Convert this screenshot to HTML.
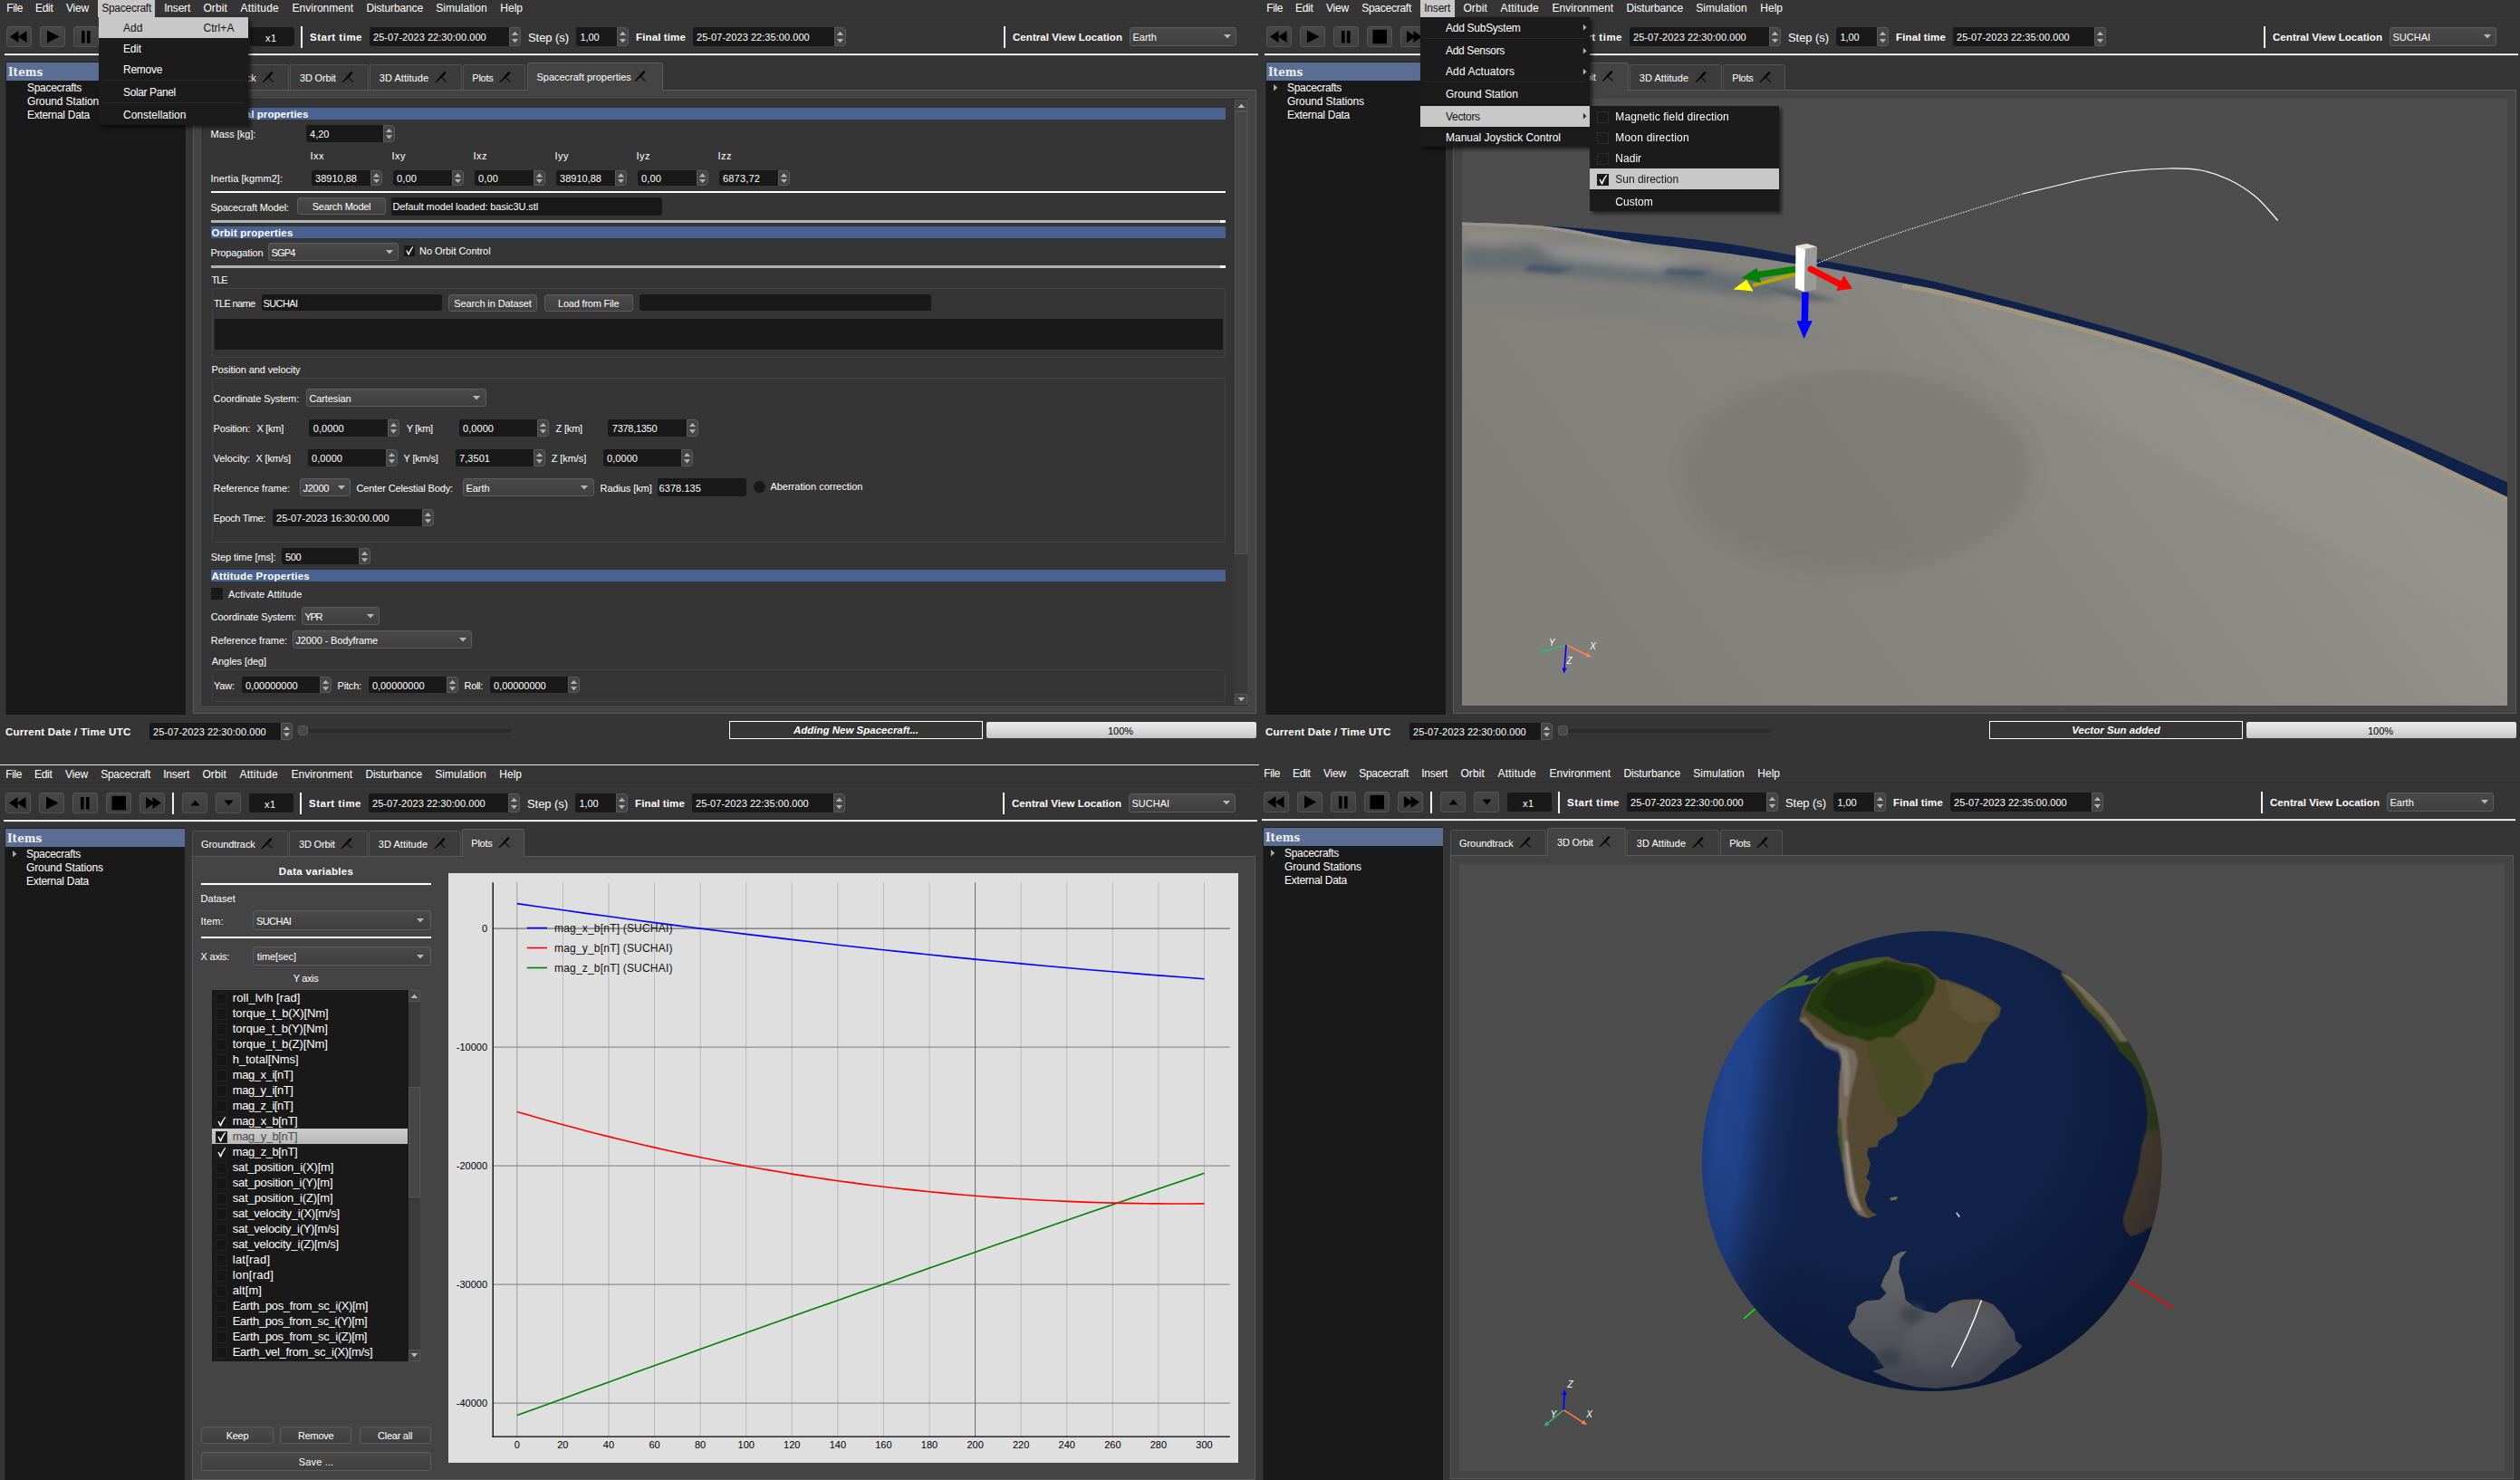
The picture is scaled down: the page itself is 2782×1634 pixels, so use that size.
<!DOCTYPE html>
<html><head><meta charset="utf-8"><title>Spacecraft simulator</title><style>
html,body{margin:0;padding:0;background:#353535;}
body{width:2782px;height:1634px;position:relative;overflow:hidden;font-family:'Liberation Sans',sans-serif;color:#fff;}
.win{position:absolute;overflow:hidden;}
.win div,.win span.t,.win svg.a{position:absolute;}
.t{white-space:nowrap;color:#fff;}
.cb{background:linear-gradient(#4a4a4a,#3f3f3f);border:1px solid #5c5c5c;border-radius:3px;box-sizing:border-box;}
.tb{width:28px;height:23px;background:linear-gradient(#474747,#3e3e3e);border:1px solid #555;border-radius:3px;box-sizing:border-box;}
</style></head><body>
<div class="win" style="left:0px;top:0px;width:1391px;height:845px;"><div style="left:0px;top:0;width:1400px;height:850px;"><div style="left:0px;top:0px;width:1400px;height:850px;background:#353535;"></div>
<div style="left:0px;top:18px;width:1400px;height:1px;background:#303030;"></div>
<span class="t" style="top:1.14px;font-size:12px;line-height:16px;letter-spacing:-0.396px;left:7.25px;">File</span>
<span class="t" style="top:1.14px;font-size:12px;line-height:16px;letter-spacing:-0.294px;left:39px;">Edit</span>
<span class="t" style="top:1.14px;font-size:12px;line-height:16px;letter-spacing:-0.198px;left:73px;">View</span>
<div style="left:108.2px;top:0px;width:63.3px;height:19px;background:#c8c8c8;"></div>
<span class="t" style="top:1.14px;font-size:12px;line-height:16px;letter-spacing:-0.256px;left:112.2px;color:#111;">Spacecraft</span>
<span class="t" style="top:1.14px;font-size:12px;line-height:16px;letter-spacing:-0.210px;left:181.25px;">Insert</span>
<span class="t" style="top:1.14px;font-size:12px;line-height:16px;letter-spacing:0.119px;left:224.4px;">Orbit</span>
<span class="t" style="top:1.14px;font-size:12px;line-height:16px;letter-spacing:0.239px;left:265.4px;">Attitude</span>
<span class="t" style="top:1.14px;font-size:12px;line-height:16px;letter-spacing:0.013px;left:322.5px;">Environment</span>
<span class="t" style="top:1.14px;font-size:12px;line-height:16px;letter-spacing:-0.130px;left:404.4px;">Disturbance</span>
<span class="t" style="top:1.14px;font-size:12px;line-height:16px;letter-spacing:0.048px;left:481.25px;">Simulation</span>
<span class="t" style="top:1.14px;font-size:12px;line-height:16px;letter-spacing:0.018px;left:552.25px;">Help</span>
<div class="tb" style="left:7px;top:29px;"><svg width="28" height="23" viewBox="0 0 28 23" style="position:absolute;left:-1px;top:-1px"><path d="M13.5 5 L13.5 18 L4 11.5Z M22.5 5 L22.5 18 L13 11.5Z" fill="#000"/></svg></div>
<div class="tb" style="left:44px;top:29px;"><svg width="28" height="23" viewBox="0 0 28 23" style="position:absolute;left:-1px;top:-1px"><path d="M8 4.5 L8 18.5 L21.5 11.5Z" fill="#000"/></svg></div>
<div class="tb" style="left:81px;top:29px;"><svg width="28" height="23" viewBox="0 0 28 23" style="position:absolute;left:-1px;top:-1px"><path d="M9 5 h3.6 v13.5 h-3.6Z M15 5 h3.6 v13.5 h-3.6Z" fill="#000"/></svg></div>
<div class="tb" style="left:118px;top:29px;"><svg width="28" height="23" viewBox="0 0 28 23" style="position:absolute;left:-1px;top:-1px"><path d="M6.5 3.8 h15.5 v15.5 h-15.5Z" fill="#000"/></svg></div>
<div class="tb" style="left:155px;top:29px;"><svg width="28" height="23" viewBox="0 0 28 23" style="position:absolute;left:-1px;top:-1px"><path d="M7 5 L7 18 L16.5 11.5Z M14.5 5 L14.5 18 L24 11.5Z" fill="#000"/></svg></div>
<div class="tb" style="left:202px;top:29px;"><svg width="28" height="23" viewBox="0 0 28 23" style="position:absolute;left:-1px;top:-1px"><path d="M9.5 14.5 L19.5 14.5 L14.5 8.5Z" fill="#000"/></svg></div>
<div class="tb" style="left:239px;top:29px;"><svg width="28" height="23" viewBox="0 0 28 23" style="position:absolute;left:-1px;top:-1px"><path d="M9.5 8.5 L19.5 8.5 L14.5 14.5Z" fill="#000"/></svg></div>
<div style="left:191px;top:28.5px;width:2px;height:24px;background:#f0f0f0;"></div>
<div style="left:332px;top:28.5px;width:2px;height:24px;background:#f0f0f0;"></div>
<div style="left:1108px;top:28.5px;width:2px;height:24px;background:#f0f0f0;"></div>
<div style="left:275.5px;top:30px;width:49px;height:20.5px;background:#191919;border-radius:3px;"></div>
<span class="t" style="top:34.73px;font-size:11px;line-height:14px;letter-spacing:0.341px;left:293.05px;">x1</span>
<span class="t" style="top:33.63px;font-size:11.5px;line-height:15px;letter-spacing:0.496px;left:342px;font-weight:bold;">Start time</span>
<div style="left:407.5px;top:30px;width:167.5px;height:21px;background:#191919;border-radius:3px;"></div>
<div style="left:562px;top:30px;width:13px;height:21px;background:#454545;border:1px solid #5a5a5a;border-radius:0 3px 3px 0;box-sizing:border-box;"></div>
<svg class="a" style="left:562px;top:30px" width="13" height="21"><path d="M2.9 8.93 L6.5 4.73 L10.1 8.93Z M2.9 13.12 L6.5 17.32 L10.1 13.12Z" fill="#b2b2b2"/></svg>
<span class="t" style="top:34.23px;font-size:11px;line-height:14px;letter-spacing:0.053px;left:412px;">25-07-2023 22:30:00.000</span>
<span class="t" style="top:32.55px;font-size:13px;line-height:17px;letter-spacing:-0.064px;left:583px;">Step (s)</span>
<div style="left:635.5px;top:30px;width:58.5px;height:21px;background:#191919;border-radius:3px;"></div>
<div style="left:681px;top:30px;width:13px;height:21px;background:#454545;border:1px solid #5a5a5a;border-radius:0 3px 3px 0;box-sizing:border-box;"></div>
<svg class="a" style="left:681px;top:30px" width="13" height="21"><path d="M2.9 8.93 L6.5 4.73 L10.1 8.93Z M2.9 13.12 L6.5 17.32 L10.1 13.12Z" fill="#b2b2b2"/></svg>
<span class="t" style="top:33.63px;font-size:11px;line-height:14px;letter-spacing:-0.102px;left:640.5px;">1,00</span>
<span class="t" style="top:33.63px;font-size:11.5px;line-height:15px;letter-spacing:0.133px;left:702px;font-weight:bold;">Final time</span>
<div style="left:764.5px;top:30px;width:169.5px;height:21px;background:#191919;border-radius:3px;"></div>
<div style="left:921px;top:30px;width:13px;height:21px;background:#454545;border:1px solid #5a5a5a;border-radius:0 3px 3px 0;box-sizing:border-box;"></div>
<svg class="a" style="left:921px;top:30px" width="13" height="21"><path d="M2.9 8.93 L6.5 4.73 L10.1 8.93Z M2.9 13.12 L6.5 17.32 L10.1 13.12Z" fill="#b2b2b2"/></svg>
<span class="t" style="top:34.23px;font-size:11px;line-height:14px;letter-spacing:0.053px;left:769px;">25-07-2023 22:35:00.000</span>
<span class="t" style="top:33.63px;font-size:11.5px;line-height:15px;letter-spacing:0.052px;left:1118px;font-weight:bold;">Central View Location</span>
<div class="cb" style="left:1247px;top:30px;width:118px;height:20.5px;"></div>
<span class="t" style="top:33.98px;font-size:11px;line-height:14px;left:1250.5px;">Earth</span>
<svg class="a" style="left:1349.5px;top:37.25px" width="10" height="6"><path d="M1 1 L9 1 L5 5.4Z" fill="#b8b8b8"/></svg>
<div style="left:5px;top:58px;width:1383.5px;height:4px;background:linear-gradient(to bottom,#2a2a2a 0,#2a2a2a 1px,#cfcfcf 1px,#cfcfcf 2px,#fff 2px,#fff 3px,#444 3px,#444 4px);"></div>
<div style="left:6px;top:68px;width:199px;height:721px;background:#242322;"></div>
<div style="left:7px;top:69px;width:198px;height:720px;background:#191919;"></div>
<div style="left:7px;top:69px;width:198px;height:19.5px;background:#5a6e94;"></div>
<span class="t" style="top:71.54px;font-size:12px;line-height:16px;left:9px;font-weight:bold;color:#eee;font-family:'DejaVu Serif',serif;">Items</span>
<span class="t" style="top:89.44px;font-size:12px;line-height:16px;letter-spacing:-0.305px;left:30px;">Spacecrafts</span>
<span class="t" style="top:104.24px;font-size:12px;line-height:16px;letter-spacing:-0.114px;left:30px;">Ground Stations</span>
<span class="t" style="top:119.14px;font-size:12px;line-height:16px;letter-spacing:-0.285px;left:30px;">External Data</span>
<div style="left:213px;top:99px;width:1174px;height:689px;background:#444;border:1px solid #5a5a5a;box-sizing:border-box;"></div>
<div style="left:213px;top:71px;width:106px;height:28px;background:#3c3c3c;border:1px solid #525252;border-bottom:none;border-radius:3px 3px 0 0;box-sizing:border-box;"></div>
<span class="t" style="top:79.13px;font-size:11px;line-height:14px;letter-spacing:-0.070px;left:223px;">Groundtrack</span>
<svg class="a" style="left:289.3px;top:78.6px" width="14" height="13" viewBox="0 0 14 13"><path d="M3.1 0.2 L7 6.2" stroke="#2c2c2c" stroke-width="0.7" fill="none"/><path d="M6.5 6 C8 8.2 10 10.5 11.6 11.7 C12.5 12.2 13.2 11.4 12.7 10.6 C11.4 9 9.4 7.3 7.5 5.5 Z" fill="#1b1b1b"/><path d="M0.1 12.1 L1.3 12 C4.2 10 7.6 6.9 11.9 2.3 C12.6 1.4 12.3 0.3 11.3 0.2 C10.4 0.1 9.8 0.8 9 1.8 C6 5.6 3 9.1 0.1 12.1 Z" fill="#000"/></svg>
<div style="left:320px;top:71px;width:87px;height:28px;background:#3c3c3c;border:1px solid #525252;border-bottom:none;border-radius:3px 3px 0 0;box-sizing:border-box;"></div>
<span class="t" style="top:79.13px;font-size:11px;line-height:14px;letter-spacing:-0.169px;left:331px;">3D Orbit</span>
<svg class="a" style="left:377.3px;top:78.6px" width="14" height="13" viewBox="0 0 14 13"><path d="M3.1 0.2 L7 6.2" stroke="#2c2c2c" stroke-width="0.7" fill="none"/><path d="M6.5 6 C8 8.2 10 10.5 11.6 11.7 C12.5 12.2 13.2 11.4 12.7 10.6 C11.4 9 9.4 7.3 7.5 5.5 Z" fill="#1b1b1b"/><path d="M0.1 12.1 L1.3 12 C4.2 10 7.6 6.9 11.9 2.3 C12.6 1.4 12.3 0.3 11.3 0.2 C10.4 0.1 9.8 0.8 9 1.8 C6 5.6 3 9.1 0.1 12.1 Z" fill="#000"/></svg>
<div style="left:408px;top:71px;width:102px;height:28px;background:#3c3c3c;border:1px solid #525252;border-bottom:none;border-radius:3px 3px 0 0;box-sizing:border-box;"></div>
<span class="t" style="top:79.13px;font-size:11px;line-height:14px;letter-spacing:0.044px;left:418.8px;">3D Attitude</span>
<svg class="a" style="left:480.3px;top:78.6px" width="14" height="13" viewBox="0 0 14 13"><path d="M3.1 0.2 L7 6.2" stroke="#2c2c2c" stroke-width="0.7" fill="none"/><path d="M6.5 6 C8 8.2 10 10.5 11.6 11.7 C12.5 12.2 13.2 11.4 12.7 10.6 C11.4 9 9.4 7.3 7.5 5.5 Z" fill="#1b1b1b"/><path d="M0.1 12.1 L1.3 12 C4.2 10 7.6 6.9 11.9 2.3 C12.6 1.4 12.3 0.3 11.3 0.2 C10.4 0.1 9.8 0.8 9 1.8 C6 5.6 3 9.1 0.1 12.1 Z" fill="#000"/></svg>
<div style="left:511px;top:71px;width:69px;height:28px;background:#3c3c3c;border:1px solid #525252;border-bottom:none;border-radius:3px 3px 0 0;box-sizing:border-box;"></div>
<span class="t" style="top:79.13px;font-size:11px;line-height:14px;letter-spacing:-0.231px;left:521.3px;">Plots</span>
<svg class="a" style="left:551.3px;top:78.6px" width="14" height="13" viewBox="0 0 14 13"><path d="M3.1 0.2 L7 6.2" stroke="#2c2c2c" stroke-width="0.7" fill="none"/><path d="M6.5 6 C8 8.2 10 10.5 11.6 11.7 C12.5 12.2 13.2 11.4 12.7 10.6 C11.4 9 9.4 7.3 7.5 5.5 Z" fill="#1b1b1b"/><path d="M0.1 12.1 L1.3 12 C4.2 10 7.6 6.9 11.9 2.3 C12.6 1.4 12.3 0.3 11.3 0.2 C10.4 0.1 9.8 0.8 9 1.8 C6 5.6 3 9.1 0.1 12.1 Z" fill="#000"/></svg>
<div style="left:582px;top:69px;width:150px;height:31px;background:#444;border:1px solid #5a5a5a;border-bottom:none;border-radius:3px 3px 0 0;box-sizing:border-box;"></div>
<span class="t" style="top:78.33px;font-size:11px;line-height:14px;letter-spacing:-0.016px;left:592.5px;">Spacecraft properties</span>
<svg class="a" style="left:699.5px;top:77.9px" width="14" height="13" viewBox="0 0 14 13"><path d="M3.1 0.2 L7 6.2" stroke="#2c2c2c" stroke-width="0.7" fill="none"/><path d="M6.5 6 C8 8.2 10 10.5 11.6 11.7 C12.5 12.2 13.2 11.4 12.7 10.6 C11.4 9 9.4 7.3 7.5 5.5 Z" fill="#1b1b1b"/><path d="M0.1 12.1 L1.3 12 C4.2 10 7.6 6.9 11.9 2.3 C12.6 1.4 12.3 0.3 11.3 0.2 C10.4 0.1 9.8 0.8 9 1.8 C6 5.6 3 9.1 0.1 12.1 Z" fill="#000"/></svg>
<span class="t" style="top:801.13px;font-size:11.5px;line-height:15px;letter-spacing:0.252px;left:6px;font-weight:bold;">Current Date / Time UTC</span>
<div style="left:164.5px;top:798px;width:158.5px;height:18.5px;background:#191919;border-radius:3px;"></div>
<div style="left:310px;top:798px;width:13px;height:18.5px;background:#454545;border:1px solid #5a5a5a;border-radius:0 3px 3px 0;box-sizing:border-box;"></div>
<svg class="a" style="left:310px;top:798px" width="13" height="18.5"><path d="M2.9 8.105 L6.5 3.905 L10.1 8.105Z M2.9 11.32 L6.5 15.52 L10.1 11.32Z" fill="#b2b2b2"/></svg>
<span class="t" style="top:800.98px;font-size:11px;line-height:14px;letter-spacing:0.053px;left:169px;">25-07-2023 22:30:00.000</span>
<div style="left:340px;top:804.5px;width:223.5px;height:4px;background:#2b2b2b;border-radius:2px;"></div>
<div style="left:329px;top:801px;width:11px;height:11px;background:#484848;border:1px solid #5c5c5c;border-radius:3px;box-sizing:border-box;"></div>
<div style="left:805px;top:796px;width:280px;height:20px;border:1px solid #fff;box-sizing:border-box;"></div>
<span class="t" style="top:799.43px;font-size:11.5px;line-height:15px;left:875.99px;font-weight:bold;font-style:italic;">Adding New Spacecraft...</span>
<div style="left:1089px;top:797px;width:298px;height:18px;background:linear-gradient(#ececec,#dcdcdc 45%,#c6c6c6);border-radius:2px;"></div>
<span class="t" style="top:799.73px;font-size:11px;line-height:14px;left:1222.93px;color:#000;">100%</span>
<div style="left:223px;top:109px;width:1154px;height:669.5px;background:#353535;border:1px solid #2c2c2c;box-sizing:border-box;"></div>
<div style="left:1363px;top:110px;width:13.5px;height:668px;background:#3a3a3a;"></div>
<div style="left:1363px;top:123px;width:13.5px;height:489px;background:#464646;border:1px solid #555;box-sizing:border-box;"></div>
<div style="left:1363px;top:110px;width:13.5px;height:13px;background:#444;border:1px solid #555;box-sizing:border-box;"></div>
<div style="left:1363px;top:765.5px;width:13.5px;height:12.5px;background:#444;border:1px solid #555;box-sizing:border-box;"></div>
<svg class="a" style="left:1365.5px;top:113.5px" width="9" height="6"><path d="M0.6 5 L8.2 5 L4.4 0.8Z" fill="#b8b8b8"/></svg>
<svg class="a" style="left:1365.5px;top:769px" width="9" height="6"><path d="M0.6 1 L8.2 1 L4.4 5.2Z" fill="#b8b8b8"/></svg>
<div style="left:233px;top:119px;width:1120px;height:13px;background:#4a6292;"></div>
<span class="t" style="top:118.63px;font-size:11.5px;line-height:15px;letter-spacing:0.048px;left:233.5px;font-weight:bold;">Physical properties</span>
<span class="t" style="top:140.53px;font-size:11px;line-height:14px;letter-spacing:-0.012px;left:232.5px;">Mass [kg]:</span>
<div style="left:337.5px;top:138px;width:98.5px;height:18.5px;background:#191919;border-radius:3px;"></div>
<div style="left:423px;top:138px;width:13px;height:18.5px;background:#454545;border:1px solid #5a5a5a;border-radius:0 3px 3px 0;box-sizing:border-box;"></div>
<svg class="a" style="left:423px;top:138px" width="13" height="18.5"><path d="M2.9 8.105 L6.5 3.905 L10.1 8.105Z M2.9 11.32 L6.5 15.52 L10.1 11.32Z" fill="#b2b2b2"/></svg>
<span class="t" style="top:140.78px;font-size:11px;line-height:14px;letter-spacing:0.023px;left:342px;">4,20</span>
<span class="t" style="top:165.33px;font-size:11px;line-height:14px;letter-spacing:0.481px;left:342.5px;">Ixx</span>
<span class="t" style="top:165.33px;font-size:11px;line-height:14px;letter-spacing:0.481px;left:432.5px;">Ixy</span>
<span class="t" style="top:165.33px;font-size:11px;line-height:14px;letter-spacing:0.481px;left:522.5px;">Ixz</span>
<span class="t" style="top:165.33px;font-size:11px;line-height:14px;letter-spacing:0.481px;left:612.5px;">Iyy</span>
<span class="t" style="top:165.33px;font-size:11px;line-height:14px;letter-spacing:0.481px;left:702.5px;">Iyz</span>
<span class="t" style="top:165.33px;font-size:11px;line-height:14px;letter-spacing:0.481px;left:792.5px;">Izz</span>
<span class="t" style="top:189.83px;font-size:11px;line-height:14px;letter-spacing:0.040px;left:232.5px;">Inertia [kgmm2]:</span>
<div style="left:343.5px;top:188px;width:78.5px;height:16.5px;background:#191919;border-radius:3px;"></div>
<div style="left:409px;top:188px;width:13px;height:16.5px;background:#454545;border:1px solid #5a5a5a;border-radius:0 3px 3px 0;box-sizing:border-box;"></div>
<svg class="a" style="left:409px;top:188px" width="13" height="16.5"><path d="M2.9 7.445 L6.5 3.245 L10.1 7.445Z M2.9 9.88 L6.5 14.08 L10.1 9.88Z" fill="#b2b2b2"/></svg>
<span class="t" style="top:189.78px;font-size:11px;line-height:14px;letter-spacing:0.016px;left:348px;">38910,88</span>
<div style="left:433.5px;top:188px;width:78.5px;height:16.5px;background:#191919;border-radius:3px;"></div>
<div style="left:499px;top:188px;width:13px;height:16.5px;background:#454545;border:1px solid #5a5a5a;border-radius:0 3px 3px 0;box-sizing:border-box;"></div>
<svg class="a" style="left:499px;top:188px" width="13" height="16.5"><path d="M2.9 7.445 L6.5 3.245 L10.1 7.445Z M2.9 9.88 L6.5 14.08 L10.1 9.88Z" fill="#b2b2b2"/></svg>
<span class="t" style="top:189.78px;font-size:11px;line-height:14px;letter-spacing:0.148px;left:438px;">0,00</span>
<div style="left:523.5px;top:188px;width:78.5px;height:16.5px;background:#191919;border-radius:3px;"></div>
<div style="left:589px;top:188px;width:13px;height:16.5px;background:#454545;border:1px solid #5a5a5a;border-radius:0 3px 3px 0;box-sizing:border-box;"></div>
<svg class="a" style="left:589px;top:188px" width="13" height="16.5"><path d="M2.9 7.445 L6.5 3.245 L10.1 7.445Z M2.9 9.88 L6.5 14.08 L10.1 9.88Z" fill="#b2b2b2"/></svg>
<span class="t" style="top:189.78px;font-size:11px;line-height:14px;letter-spacing:0.148px;left:528px;">0,00</span>
<div style="left:613.5px;top:188px;width:78.5px;height:16.5px;background:#191919;border-radius:3px;"></div>
<div style="left:679px;top:188px;width:13px;height:16.5px;background:#454545;border:1px solid #5a5a5a;border-radius:0 3px 3px 0;box-sizing:border-box;"></div>
<svg class="a" style="left:679px;top:188px" width="13" height="16.5"><path d="M2.9 7.445 L6.5 3.245 L10.1 7.445Z M2.9 9.88 L6.5 14.08 L10.1 9.88Z" fill="#b2b2b2"/></svg>
<span class="t" style="top:189.78px;font-size:11px;line-height:14px;letter-spacing:0.016px;left:618px;">38910,88</span>
<div style="left:703.5px;top:188px;width:78.5px;height:16.5px;background:#191919;border-radius:3px;"></div>
<div style="left:769px;top:188px;width:13px;height:16.5px;background:#454545;border:1px solid #5a5a5a;border-radius:0 3px 3px 0;box-sizing:border-box;"></div>
<svg class="a" style="left:769px;top:188px" width="13" height="16.5"><path d="M2.9 7.445 L6.5 3.245 L10.1 7.445Z M2.9 9.88 L6.5 14.08 L10.1 9.88Z" fill="#b2b2b2"/></svg>
<span class="t" style="top:189.78px;font-size:11px;line-height:14px;letter-spacing:0.148px;left:708px;">0,00</span>
<div style="left:793.5px;top:188px;width:78.5px;height:16.5px;background:#191919;border-radius:3px;"></div>
<div style="left:859px;top:188px;width:13px;height:16.5px;background:#454545;border:1px solid #5a5a5a;border-radius:0 3px 3px 0;box-sizing:border-box;"></div>
<svg class="a" style="left:859px;top:188px" width="13" height="16.5"><path d="M2.9 7.445 L6.5 3.245 L10.1 7.445Z M2.9 9.88 L6.5 14.08 L10.1 9.88Z" fill="#b2b2b2"/></svg>
<span class="t" style="top:189.78px;font-size:11px;line-height:14px;letter-spacing:0.177px;left:798px;">6873,72</span>
<div style="left:233px;top:210.5px;width:1120px;height:2px;background:#fff;"></div>
<span class="t" style="top:221.53px;font-size:11px;line-height:14px;letter-spacing:-0.126px;left:232.5px;">Spacecraft Model:</span>
<div class="cb" style="left:328px;top:218px;width:98px;height:19px;"></div>
<span class="t" style="top:220.83px;font-size:11px;line-height:14px;letter-spacing:-0.280px;left:344.75px;">Search Model</span>
<div style="left:432px;top:218px;width:298.5px;height:19.5px;background:#191919;border-radius:3px;"></div>
<span class="t" style="top:221.28px;font-size:11px;line-height:14px;letter-spacing:-0.102px;left:433.5px;">Default model loaded: basic3U.stl</span>
<div style="left:233px;top:243px;width:1120px;height:3px;background:#b2b2b2;"></div>
<div style="left:1347px;top:243px;width:6px;height:3px;background:#fff;"></div>
<div style="left:233px;top:250px;width:1120px;height:13px;background:#4a6292;"></div>
<span class="t" style="top:249.63px;font-size:11.5px;line-height:15px;letter-spacing:0.194px;left:233.5px;font-weight:bold;">Orbit properties</span>
<span class="t" style="top:271.83px;font-size:11px;line-height:14px;letter-spacing:-0.120px;left:232.5px;">Propagation</span>
<div class="cb" style="left:296px;top:268px;width:144px;height:20px;"></div>
<span class="t" style="top:271.53px;font-size:11px;line-height:14px;letter-spacing:-0.837px;left:299.5px;">SGP4</span>
<svg class="a" style="left:424.5px;top:275px" width="10" height="6"><path d="M1 1 L9 1 L5 5.4Z" fill="#b8b8b8"/></svg>
<div style="left:446px;top:271px;width:12px;height:12px;background:#191919;"></div>
<svg class="a" style="left:446px;top:271px" width="12" height="12" viewBox="0 0 12 12"><path d="M2.2 5.6 L3.4 5.2 L5 8.4 C6.2 5.6 7.6 3.2 9.6 1 L10.4 1.4 C8.6 4 7 7 5.6 10.6 L4.6 10.6 Z" fill="#fff"/></svg>
<span class="t" style="top:270.03px;font-size:11px;line-height:14px;letter-spacing:-0.060px;left:463px;">No Orbit Control</span>
<div style="left:233px;top:293px;width:1120px;height:3px;background:#b2b2b2;"></div>
<div style="left:1347px;top:293px;width:6px;height:3px;background:#fff;"></div>
<span class="t" style="top:302.03px;font-size:11px;line-height:14px;letter-spacing:-1.058px;left:233.5px;">TLE</span>
<div style="left:234px;top:318px;width:1119px;height:76.5px;border:1px solid #424242;border-radius:3px;box-sizing:border-box;"></div>
<span class="t" style="top:328.13px;font-size:11px;line-height:14px;letter-spacing:-0.655px;left:236px;">TLE name</span>
<div style="left:288.5px;top:325px;width:199px;height:18px;background:#191919;border-radius:3px;"></div>
<span class="t" style="top:327.53px;font-size:11px;line-height:14px;letter-spacing:-0.594px;left:290.5px;">SUCHAI</span>
<div class="cb" style="left:495px;top:325px;width:98px;height:19px;"></div>
<span class="t" style="top:327.83px;font-size:11px;line-height:14px;letter-spacing:-0.114px;left:501.25px;">Search in Dataset</span>
<div class="cb" style="left:601px;top:325px;width:97.5px;height:19px;"></div>
<span class="t" style="top:327.83px;font-size:11px;line-height:14px;letter-spacing:-0.200px;left:616.00px;">Load from File</span>
<div style="left:706px;top:325px;width:321.5px;height:18px;background:#191919;border-radius:3px;"></div>
<div style="left:236.5px;top:351.5px;width:1113px;height:34.5px;background:#191919;"></div>
<span class="t" style="top:400.83px;font-size:11px;line-height:14px;letter-spacing:-0.108px;left:233.5px;">Position and velocity</span>
<div style="left:234px;top:417px;width:1119px;height:182px;border:1px solid #424242;border-radius:3px;box-sizing:border-box;"></div>
<span class="t" style="top:432.93px;font-size:11px;line-height:14px;letter-spacing:-0.116px;left:235.6px;">Coordinate System:</span>
<div class="cb" style="left:338px;top:429px;width:198.5px;height:20px;"></div>
<span class="t" style="top:432.53px;font-size:11px;line-height:14px;letter-spacing:-0.119px;left:341.5px;">Cartesian</span>
<svg class="a" style="left:521px;top:436px" width="10" height="6"><path d="M1 1 L9 1 L5 5.4Z" fill="#b8b8b8"/></svg>
<span class="t" style="top:465.93px;font-size:11px;line-height:14px;letter-spacing:-0.188px;left:235.6px;">Position:</span>
<span class="t" style="top:465.93px;font-size:11px;line-height:14px;letter-spacing:-0.278px;left:283.5px;">X [km]</span>
<div style="left:341.3px;top:463px;width:99.7px;height:18.5px;background:#191919;border-radius:3px;"></div>
<div style="left:428px;top:463px;width:13px;height:18.5px;background:#454545;border:1px solid #5a5a5a;border-radius:0 3px 3px 0;box-sizing:border-box;"></div>
<svg class="a" style="left:428px;top:463px" width="13" height="18.5"><path d="M2.9 8.105 L6.5 3.905 L10.1 8.105Z M2.9 11.32 L6.5 15.52 L10.1 11.32Z" fill="#b2b2b2"/></svg>
<span class="t" style="top:465.78px;font-size:11px;line-height:14px;letter-spacing:0.060px;left:345.8px;">0,0000</span>
<span class="t" style="top:465.93px;font-size:11px;line-height:14px;letter-spacing:-0.328px;left:448.8px;">Y [km]</span>
<div style="left:506.5px;top:463px;width:99.5px;height:18.5px;background:#191919;border-radius:3px;"></div>
<div style="left:593px;top:463px;width:13px;height:18.5px;background:#454545;border:1px solid #5a5a5a;border-radius:0 3px 3px 0;box-sizing:border-box;"></div>
<svg class="a" style="left:593px;top:463px" width="13" height="18.5"><path d="M2.9 8.105 L6.5 3.905 L10.1 8.105Z M2.9 11.32 L6.5 15.52 L10.1 11.32Z" fill="#b2b2b2"/></svg>
<span class="t" style="top:465.78px;font-size:11px;line-height:14px;letter-spacing:0.060px;left:511px;">0,0000</span>
<span class="t" style="top:465.93px;font-size:11px;line-height:14px;letter-spacing:-0.175px;left:613.5px;">Z [km]</span>
<div style="left:671.3px;top:463px;width:99.7px;height:18.5px;background:#191919;border-radius:3px;"></div>
<div style="left:758px;top:463px;width:13px;height:18.5px;background:#454545;border:1px solid #5a5a5a;border-radius:0 3px 3px 0;box-sizing:border-box;"></div>
<svg class="a" style="left:758px;top:463px" width="13" height="18.5"><path d="M2.9 8.105 L6.5 3.905 L10.1 8.105Z M2.9 11.32 L6.5 15.52 L10.1 11.32Z" fill="#b2b2b2"/></svg>
<span class="t" style="top:465.78px;font-size:11px;line-height:14px;letter-spacing:-0.277px;left:675.8px;">7378,1350</span>
<span class="t" style="top:499.13px;font-size:11px;line-height:14px;letter-spacing:-0.052px;left:235.6px;">Velocity:</span>
<span class="t" style="top:499.13px;font-size:11px;line-height:14px;letter-spacing:-0.153px;left:282.5px;">X [km/s]</span>
<div style="left:339.5px;top:496px;width:99.5px;height:18.5px;background:#191919;border-radius:3px;"></div>
<div style="left:426px;top:496px;width:13px;height:18.5px;background:#454545;border:1px solid #5a5a5a;border-radius:0 3px 3px 0;box-sizing:border-box;"></div>
<svg class="a" style="left:426px;top:496px" width="13" height="18.5"><path d="M2.9 8.105 L6.5 3.905 L10.1 8.105Z M2.9 11.32 L6.5 15.52 L10.1 11.32Z" fill="#b2b2b2"/></svg>
<span class="t" style="top:498.78px;font-size:11px;line-height:14px;letter-spacing:0.060px;left:344px;">0,0000</span>
<span class="t" style="top:499.13px;font-size:11px;line-height:14px;letter-spacing:-0.191px;left:445.6px;">Y [km/s]</span>
<div style="left:502.5px;top:496px;width:99.2px;height:18.5px;background:#191919;border-radius:3px;"></div>
<div style="left:588.7px;top:496px;width:13px;height:18.5px;background:#454545;border:1px solid #5a5a5a;border-radius:0 3px 3px 0;box-sizing:border-box;"></div>
<svg class="a" style="left:588.7px;top:496px" width="13.0" height="18.5"><path d="M2.9 8.105 L6.5 3.905 L10.1 8.105Z M2.9 11.32 L6.5 15.52 L10.1 11.32Z" fill="#b2b2b2"/></svg>
<span class="t" style="top:498.78px;font-size:11px;line-height:14px;letter-spacing:0.060px;left:507px;">7,3501</span>
<span class="t" style="top:499.13px;font-size:11px;line-height:14px;letter-spacing:-0.076px;left:608.7px;">Z [km/s]</span>
<div style="left:665.5px;top:496px;width:99.8px;height:18.5px;background:#191919;border-radius:3px;"></div>
<div style="left:752.3px;top:496px;width:13px;height:18.5px;background:#454545;border:1px solid #5a5a5a;border-radius:0 3px 3px 0;box-sizing:border-box;"></div>
<svg class="a" style="left:752.3px;top:496px" width="13.0" height="18.5"><path d="M2.9 8.105 L6.5 3.905 L10.1 8.105Z M2.9 11.32 L6.5 15.52 L10.1 11.32Z" fill="#b2b2b2"/></svg>
<span class="t" style="top:498.78px;font-size:11px;line-height:14px;letter-spacing:0.060px;left:670px;">0,0000</span>
<span class="t" style="top:531.73px;font-size:11px;line-height:14px;letter-spacing:-0.030px;left:235.6px;">Reference frame:</span>
<div class="cb" style="left:331px;top:528px;width:56px;height:20px;"></div>
<span class="t" style="top:531.53px;font-size:11px;line-height:14px;letter-spacing:-0.274px;left:334.5px;">J2000</span>
<svg class="a" style="left:371.5px;top:535px" width="10" height="6"><path d="M1 1 L9 1 L5 5.4Z" fill="#b8b8b8"/></svg>
<span class="t" style="top:531.73px;font-size:11px;line-height:14px;letter-spacing:-0.133px;left:393.5px;">Center Celestial Body:</span>
<div class="cb" style="left:511px;top:528px;width:144.5px;height:20px;"></div>
<span class="t" style="top:531.53px;font-size:11px;line-height:14px;letter-spacing:-0.058px;left:514.5px;">Earth</span>
<svg class="a" style="left:640px;top:535px" width="10" height="6"><path d="M1 1 L9 1 L5 5.4Z" fill="#b8b8b8"/></svg>
<span class="t" style="top:531.73px;font-size:11px;line-height:14px;letter-spacing:-0.097px;left:662.6px;">Radius [km]</span>
<div style="left:725.5px;top:528px;width:98.5px;height:20.4px;background:#191919;border-radius:3px;"></div>
<span class="t" style="top:531.73px;font-size:11px;line-height:14px;letter-spacing:0.078px;left:727.5px;">6378.135</span>
<div style="left:831.5px;top:530.5px;width:13.5px;height:13.5px;background:#181818;border-radius:50%;"></div>
<span class="t" style="top:530.33px;font-size:11px;line-height:14px;letter-spacing:-0.005px;left:850.4px;">Aberration correction</span>
<span class="t" style="top:564.83px;font-size:11px;line-height:14px;letter-spacing:-0.331px;left:235.6px;">Epoch Time:</span>
<div style="left:300.6px;top:562px;width:178.4px;height:18.5px;background:#191919;border-radius:3px;"></div>
<div style="left:466px;top:562px;width:13px;height:18.5px;background:#454545;border:1px solid #5a5a5a;border-radius:0 3px 3px 0;box-sizing:border-box;"></div>
<svg class="a" style="left:466px;top:562px" width="13" height="18.5"><path d="M2.9 8.105 L6.5 3.905 L10.1 8.105Z M2.9 11.32 L6.5 15.52 L10.1 11.32Z" fill="#b2b2b2"/></svg>
<span class="t" style="top:564.78px;font-size:11px;line-height:14px;letter-spacing:0.042px;left:305.1px;">25-07-2023 16:30:00.000</span>
<span class="t" style="top:607.83px;font-size:11px;line-height:14px;letter-spacing:-0.090px;left:232.8px;">Step time [ms]:</span>
<div style="left:310.6px;top:605px;width:98.6px;height:18.3px;background:#191919;border-radius:3px;"></div>
<div style="left:396.2px;top:605px;width:13px;height:18.3px;background:#454545;border:1px solid #5a5a5a;border-radius:0 3px 3px 0;box-sizing:border-box;"></div>
<svg class="a" style="left:396.2px;top:605px" width="13.0" height="18.299999999999955"><path d="M2.9 8.039 L6.5 3.839 L10.1 8.039Z M2.9 11.176 L6.5 15.376 L10.1 11.176Z" fill="#b2b2b2"/></svg>
<span class="t" style="top:607.68px;font-size:11px;line-height:14px;letter-spacing:-0.384px;left:315.1px;">500</span>
<div style="left:233px;top:629px;width:1120px;height:13px;background:#4a6292;"></div>
<span class="t" style="top:628.63px;font-size:11.5px;line-height:15px;letter-spacing:0.263px;left:233.5px;font-weight:bold;">Attitude Properties</span>
<div style="left:233px;top:648.5px;width:13px;height:13px;background:#191919;"></div>
<span class="t" style="top:649.03px;font-size:11px;line-height:14px;letter-spacing:0.154px;left:252px;">Activate Attitude</span>
<span class="t" style="top:674.03px;font-size:11px;line-height:14px;letter-spacing:-0.133px;left:232.8px;">Coordinate System:</span>
<div class="cb" style="left:333px;top:670px;width:86px;height:20px;"></div>
<span class="t" style="top:673.53px;font-size:11px;line-height:14px;letter-spacing:-1.373px;left:336.5px;">YPR</span>
<svg class="a" style="left:403.5px;top:677px" width="10" height="6"><path d="M1 1 L9 1 L5 5.4Z" fill="#b8b8b8"/></svg>
<span class="t" style="top:699.83px;font-size:11px;line-height:14px;letter-spacing:-0.048px;left:232.8px;">Reference frame:</span>
<div class="cb" style="left:323px;top:696px;width:198px;height:20px;"></div>
<span class="t" style="top:699.53px;font-size:11px;line-height:14px;letter-spacing:-0.143px;left:326.5px;">J2000 - Bodyframe</span>
<svg class="a" style="left:505.5px;top:703px" width="10" height="6"><path d="M1 1 L9 1 L5 5.4Z" fill="#b8b8b8"/></svg>
<span class="t" style="top:723.13px;font-size:11px;line-height:14px;letter-spacing:-0.079px;left:233.8px;">Angles [deg]</span>
<div style="left:234px;top:739.3px;width:1119px;height:35.7px;border:1px solid #424242;border-radius:3px;box-sizing:border-box;"></div>
<span class="t" style="top:749.83px;font-size:11px;line-height:14px;letter-spacing:-0.159px;left:236px;">Yaw:</span>
<div style="left:266.5px;top:747px;width:99.7px;height:18.3px;background:#191919;border-radius:3px;"></div>
<div style="left:353.2px;top:747px;width:13px;height:18.3px;background:#454545;border:1px solid #5a5a5a;border-radius:0 3px 3px 0;box-sizing:border-box;"></div>
<svg class="a" style="left:353.2px;top:747px" width="13.0" height="18.299999999999955"><path d="M2.9 8.039 L6.5 3.839 L10.1 8.039Z M2.9 11.176 L6.5 15.376 L10.1 11.176Z" fill="#b2b2b2"/></svg>
<span class="t" style="top:749.68px;font-size:11px;line-height:14px;letter-spacing:-0.061px;left:271px;">0,00000000</span>
<span class="t" style="top:749.83px;font-size:11px;line-height:14px;letter-spacing:-0.168px;left:372.5px;">Pitch:</span>
<div style="left:406.5px;top:747px;width:99.7px;height:18.3px;background:#191919;border-radius:3px;"></div>
<div style="left:493.2px;top:747px;width:13px;height:18.3px;background:#454545;border:1px solid #5a5a5a;border-radius:0 3px 3px 0;box-sizing:border-box;"></div>
<svg class="a" style="left:493.2px;top:747px" width="13.0" height="18.299999999999955"><path d="M2.9 8.039 L6.5 3.839 L10.1 8.039Z M2.9 11.176 L6.5 15.376 L10.1 11.176Z" fill="#b2b2b2"/></svg>
<span class="t" style="top:749.68px;font-size:11px;line-height:14px;letter-spacing:-0.061px;left:411px;">0,00000000</span>
<span class="t" style="top:749.83px;font-size:11px;line-height:14px;letter-spacing:-0.301px;left:512.5px;">Roll:</span>
<div style="left:540.6px;top:747px;width:99.6px;height:18.3px;background:#191919;border-radius:3px;"></div>
<div style="left:627.2px;top:747px;width:13px;height:18.3px;background:#454545;border:1px solid #5a5a5a;border-radius:0 3px 3px 0;box-sizing:border-box;"></div>
<svg class="a" style="left:627.2px;top:747px" width="13.0" height="18.299999999999955"><path d="M2.9 8.039 L6.5 3.839 L10.1 8.039Z M2.9 11.176 L6.5 15.376 L10.1 11.176Z" fill="#b2b2b2"/></svg>
<span class="t" style="top:749.68px;font-size:11px;line-height:14px;letter-spacing:-0.061px;left:545.1px;">0,00000000</span>
<div style="left:108.5px;top:19px;width:165.5px;height:118.5px;background:#1b1b1b;box-shadow:3px 3px 4px rgba(0,0,0,0.55);"></div>
<div style="left:108.5px;top:19.25px;width:165.5px;height:22.5px;background:#c8c8c8;"></div>
<span class="t" style="top:22.94px;font-size:12px;line-height:16px;letter-spacing:0.050px;left:136px;color:#151515;">Add</span>
<span class="t" style="top:22.94px;font-size:12px;line-height:16px;letter-spacing:0.071px;left:224.4px;color:#151515;">Ctrl+A</span>
<span class="t" style="top:46.14px;font-size:12px;line-height:16px;letter-spacing:-0.219px;left:136px;color:#fff;">Edit</span>
<span class="t" style="top:69.34px;font-size:12px;line-height:16px;letter-spacing:-0.264px;left:136px;color:#fff;">Remove</span>
<div style="left:113px;top:88.3px;width:156.5px;height:1px;background:#2a2a2a;"></div>
<span class="t" style="top:94.34px;font-size:12px;line-height:16px;letter-spacing:-0.376px;left:136px;color:#fff;">Solar Panel</span>
<div style="left:113px;top:112.7px;width:156.5px;height:1px;background:#2a2a2a;"></div>
<span class="t" style="top:119.34px;font-size:12px;line-height:16px;letter-spacing:0.002px;left:136px;color:#fff;">Constellation</span></div></div>
<div class="win" style="left:1391px;top:0px;width:1391px;height:845px;"><div style="left:0px;top:0;width:1400px;height:850px;"><div style="left:0px;top:0px;width:1400px;height:850px;background:#353535;"></div>
<div style="left:0px;top:18px;width:1400px;height:1px;background:#303030;"></div>
<span class="t" style="top:1.14px;font-size:12px;line-height:16px;letter-spacing:-0.396px;left:7.25px;">File</span>
<span class="t" style="top:1.14px;font-size:12px;line-height:16px;letter-spacing:-0.294px;left:39px;">Edit</span>
<span class="t" style="top:1.14px;font-size:12px;line-height:16px;letter-spacing:-0.198px;left:73px;">View</span>
<span class="t" style="top:1.14px;font-size:12px;line-height:16px;letter-spacing:-0.256px;left:112.2px;">Spacecraft</span>
<div style="left:177.25px;top:0px;width:37.25px;height:19px;background:#c8c8c8;"></div>
<span class="t" style="top:1.14px;font-size:12px;line-height:16px;letter-spacing:-0.210px;left:181.25px;color:#111;">Insert</span>
<span class="t" style="top:1.14px;font-size:12px;line-height:16px;letter-spacing:0.119px;left:224.4px;">Orbit</span>
<span class="t" style="top:1.14px;font-size:12px;line-height:16px;letter-spacing:0.239px;left:265.4px;">Attitude</span>
<span class="t" style="top:1.14px;font-size:12px;line-height:16px;letter-spacing:0.013px;left:322.5px;">Environment</span>
<span class="t" style="top:1.14px;font-size:12px;line-height:16px;letter-spacing:-0.130px;left:404.4px;">Disturbance</span>
<span class="t" style="top:1.14px;font-size:12px;line-height:16px;letter-spacing:0.048px;left:481.25px;">Simulation</span>
<span class="t" style="top:1.14px;font-size:12px;line-height:16px;letter-spacing:0.018px;left:552.25px;">Help</span>
<div class="tb" style="left:7px;top:29px;"><svg width="28" height="23" viewBox="0 0 28 23" style="position:absolute;left:-1px;top:-1px"><path d="M13.5 5 L13.5 18 L4 11.5Z M22.5 5 L22.5 18 L13 11.5Z" fill="#000"/></svg></div>
<div class="tb" style="left:44px;top:29px;"><svg width="28" height="23" viewBox="0 0 28 23" style="position:absolute;left:-1px;top:-1px"><path d="M8 4.5 L8 18.5 L21.5 11.5Z" fill="#000"/></svg></div>
<div class="tb" style="left:81px;top:29px;"><svg width="28" height="23" viewBox="0 0 28 23" style="position:absolute;left:-1px;top:-1px"><path d="M9 5 h3.6 v13.5 h-3.6Z M15 5 h3.6 v13.5 h-3.6Z" fill="#000"/></svg></div>
<div class="tb" style="left:118px;top:29px;"><svg width="28" height="23" viewBox="0 0 28 23" style="position:absolute;left:-1px;top:-1px"><path d="M6.5 3.8 h15.5 v15.5 h-15.5Z" fill="#000"/></svg></div>
<div class="tb" style="left:155px;top:29px;"><svg width="28" height="23" viewBox="0 0 28 23" style="position:absolute;left:-1px;top:-1px"><path d="M7 5 L7 18 L16.5 11.5Z M14.5 5 L14.5 18 L24 11.5Z" fill="#000"/></svg></div>
<div class="tb" style="left:202px;top:29px;"><svg width="28" height="23" viewBox="0 0 28 23" style="position:absolute;left:-1px;top:-1px"><path d="M9.5 14.5 L19.5 14.5 L14.5 8.5Z" fill="#000"/></svg></div>
<div class="tb" style="left:239px;top:29px;"><svg width="28" height="23" viewBox="0 0 28 23" style="position:absolute;left:-1px;top:-1px"><path d="M9.5 8.5 L19.5 8.5 L14.5 14.5Z" fill="#000"/></svg></div>
<div style="left:191px;top:28.5px;width:2px;height:24px;background:#f0f0f0;"></div>
<div style="left:332px;top:28.5px;width:2px;height:24px;background:#f0f0f0;"></div>
<div style="left:1108px;top:28.5px;width:2px;height:24px;background:#f0f0f0;"></div>
<div style="left:275.5px;top:30px;width:49px;height:20.5px;background:#191919;border-radius:3px;"></div>
<span class="t" style="top:34.73px;font-size:11px;line-height:14px;letter-spacing:0.341px;left:293.05px;">x1</span>
<span class="t" style="top:33.63px;font-size:11.5px;line-height:15px;letter-spacing:0.496px;left:342px;font-weight:bold;">Start time</span>
<div style="left:407.5px;top:30px;width:167.5px;height:21px;background:#191919;border-radius:3px;"></div>
<div style="left:562px;top:30px;width:13px;height:21px;background:#454545;border:1px solid #5a5a5a;border-radius:0 3px 3px 0;box-sizing:border-box;"></div>
<svg class="a" style="left:562px;top:30px" width="13" height="21"><path d="M2.9 8.93 L6.5 4.73 L10.1 8.93Z M2.9 13.12 L6.5 17.32 L10.1 13.12Z" fill="#b2b2b2"/></svg>
<span class="t" style="top:34.23px;font-size:11px;line-height:14px;letter-spacing:0.053px;left:412px;">25-07-2023 22:30:00.000</span>
<span class="t" style="top:32.55px;font-size:13px;line-height:17px;letter-spacing:-0.064px;left:583px;">Step (s)</span>
<div style="left:635.5px;top:30px;width:58.5px;height:21px;background:#191919;border-radius:3px;"></div>
<div style="left:681px;top:30px;width:13px;height:21px;background:#454545;border:1px solid #5a5a5a;border-radius:0 3px 3px 0;box-sizing:border-box;"></div>
<svg class="a" style="left:681px;top:30px" width="13" height="21"><path d="M2.9 8.93 L6.5 4.73 L10.1 8.93Z M2.9 13.12 L6.5 17.32 L10.1 13.12Z" fill="#b2b2b2"/></svg>
<span class="t" style="top:33.63px;font-size:11px;line-height:14px;letter-spacing:-0.102px;left:640.5px;">1,00</span>
<span class="t" style="top:33.63px;font-size:11.5px;line-height:15px;letter-spacing:0.133px;left:702px;font-weight:bold;">Final time</span>
<div style="left:764.5px;top:30px;width:169.5px;height:21px;background:#191919;border-radius:3px;"></div>
<div style="left:921px;top:30px;width:13px;height:21px;background:#454545;border:1px solid #5a5a5a;border-radius:0 3px 3px 0;box-sizing:border-box;"></div>
<svg class="a" style="left:921px;top:30px" width="13" height="21"><path d="M2.9 8.93 L6.5 4.73 L10.1 8.93Z M2.9 13.12 L6.5 17.32 L10.1 13.12Z" fill="#b2b2b2"/></svg>
<span class="t" style="top:34.23px;font-size:11px;line-height:14px;letter-spacing:0.053px;left:769px;">25-07-2023 22:35:00.000</span>
<span class="t" style="top:33.63px;font-size:11.5px;line-height:15px;letter-spacing:0.052px;left:1118px;font-weight:bold;">Central View Location</span>
<div class="cb" style="left:1247px;top:30px;width:118px;height:20.5px;"></div>
<span class="t" style="top:33.98px;font-size:11px;line-height:14px;left:1250.5px;">SUCHAI</span>
<svg class="a" style="left:1349.5px;top:37.25px" width="10" height="6"><path d="M1 1 L9 1 L5 5.4Z" fill="#b8b8b8"/></svg>
<div style="left:5px;top:58px;width:1383.5px;height:4px;background:linear-gradient(to bottom,#2a2a2a 0,#2a2a2a 1px,#cfcfcf 1px,#cfcfcf 2px,#fff 2px,#fff 3px,#444 3px,#444 4px);"></div>
<div style="left:6px;top:68px;width:199px;height:721px;background:#242322;"></div>
<div style="left:7px;top:69px;width:198px;height:720px;background:#191919;"></div>
<div style="left:7px;top:69px;width:198px;height:19.5px;background:#5a6e94;"></div>
<span class="t" style="top:71.54px;font-size:12px;line-height:16px;left:9px;font-weight:bold;color:#eee;font-family:'DejaVu Serif',serif;">Items</span>
<svg class="a" style="left:14px;top:92px" width="7" height="10"><path d="M1 1 L1 8.4 L5.4 4.7Z" fill="#a8a8a8"/></svg>
<span class="t" style="top:89.44px;font-size:12px;line-height:16px;letter-spacing:-0.305px;left:30px;">Spacecrafts</span>
<span class="t" style="top:104.24px;font-size:12px;line-height:16px;letter-spacing:-0.114px;left:30px;">Ground Stations</span>
<span class="t" style="top:119.14px;font-size:12px;line-height:16px;letter-spacing:-0.285px;left:30px;">External Data</span>
<div style="left:213px;top:99px;width:1174px;height:689px;background:#444;border:1px solid #5a5a5a;box-sizing:border-box;"></div>
<div style="left:213px;top:71px;width:106px;height:28px;background:#3c3c3c;border:1px solid #525252;border-bottom:none;border-radius:3px 3px 0 0;box-sizing:border-box;"></div>
<span class="t" style="top:79.13px;font-size:11px;line-height:14px;letter-spacing:-0.070px;left:223px;">Groundtrack</span>
<svg class="a" style="left:289.3px;top:78.6px" width="14" height="13" viewBox="0 0 14 13"><path d="M3.1 0.2 L7 6.2" stroke="#2c2c2c" stroke-width="0.7" fill="none"/><path d="M6.5 6 C8 8.2 10 10.5 11.6 11.7 C12.5 12.2 13.2 11.4 12.7 10.6 C11.4 9 9.4 7.3 7.5 5.5 Z" fill="#1b1b1b"/><path d="M0.1 12.1 L1.3 12 C4.2 10 7.6 6.9 11.9 2.3 C12.6 1.4 12.3 0.3 11.3 0.2 C10.4 0.1 9.8 0.8 9 1.8 C6 5.6 3 9.1 0.1 12.1 Z" fill="#000"/></svg>
<div style="left:320px;top:69px;width:87px;height:31px;background:#444;border:1px solid #5a5a5a;border-bottom:none;border-radius:3px 3px 0 0;box-sizing:border-box;"></div>
<span class="t" style="top:78.33px;font-size:11px;line-height:14px;letter-spacing:-0.169px;left:331px;">3D Orbit</span>
<svg class="a" style="left:377.3px;top:77.9px" width="14" height="13" viewBox="0 0 14 13"><path d="M3.1 0.2 L7 6.2" stroke="#2c2c2c" stroke-width="0.7" fill="none"/><path d="M6.5 6 C8 8.2 10 10.5 11.6 11.7 C12.5 12.2 13.2 11.4 12.7 10.6 C11.4 9 9.4 7.3 7.5 5.5 Z" fill="#1b1b1b"/><path d="M0.1 12.1 L1.3 12 C4.2 10 7.6 6.9 11.9 2.3 C12.6 1.4 12.3 0.3 11.3 0.2 C10.4 0.1 9.8 0.8 9 1.8 C6 5.6 3 9.1 0.1 12.1 Z" fill="#000"/></svg>
<div style="left:408px;top:71px;width:102px;height:28px;background:#3c3c3c;border:1px solid #525252;border-bottom:none;border-radius:3px 3px 0 0;box-sizing:border-box;"></div>
<span class="t" style="top:79.13px;font-size:11px;line-height:14px;letter-spacing:0.044px;left:418.8px;">3D Attitude</span>
<svg class="a" style="left:480.3px;top:78.6px" width="14" height="13" viewBox="0 0 14 13"><path d="M3.1 0.2 L7 6.2" stroke="#2c2c2c" stroke-width="0.7" fill="none"/><path d="M6.5 6 C8 8.2 10 10.5 11.6 11.7 C12.5 12.2 13.2 11.4 12.7 10.6 C11.4 9 9.4 7.3 7.5 5.5 Z" fill="#1b1b1b"/><path d="M0.1 12.1 L1.3 12 C4.2 10 7.6 6.9 11.9 2.3 C12.6 1.4 12.3 0.3 11.3 0.2 C10.4 0.1 9.8 0.8 9 1.8 C6 5.6 3 9.1 0.1 12.1 Z" fill="#000"/></svg>
<div style="left:511px;top:71px;width:69px;height:28px;background:#3c3c3c;border:1px solid #525252;border-bottom:none;border-radius:3px 3px 0 0;box-sizing:border-box;"></div>
<span class="t" style="top:79.13px;font-size:11px;line-height:14px;letter-spacing:-0.231px;left:521.3px;">Plots</span>
<svg class="a" style="left:551.3px;top:78.6px" width="14" height="13" viewBox="0 0 14 13"><path d="M3.1 0.2 L7 6.2" stroke="#2c2c2c" stroke-width="0.7" fill="none"/><path d="M6.5 6 C8 8.2 10 10.5 11.6 11.7 C12.5 12.2 13.2 11.4 12.7 10.6 C11.4 9 9.4 7.3 7.5 5.5 Z" fill="#1b1b1b"/><path d="M0.1 12.1 L1.3 12 C4.2 10 7.6 6.9 11.9 2.3 C12.6 1.4 12.3 0.3 11.3 0.2 C10.4 0.1 9.8 0.8 9 1.8 C6 5.6 3 9.1 0.1 12.1 Z" fill="#000"/></svg>
<span class="t" style="top:801.13px;font-size:11.5px;line-height:15px;letter-spacing:0.252px;left:6px;font-weight:bold;">Current Date / Time UTC</span>
<div style="left:164.5px;top:798px;width:158.5px;height:18.5px;background:#191919;border-radius:3px;"></div>
<div style="left:310px;top:798px;width:13px;height:18.5px;background:#454545;border:1px solid #5a5a5a;border-radius:0 3px 3px 0;box-sizing:border-box;"></div>
<svg class="a" style="left:310px;top:798px" width="13" height="18.5"><path d="M2.9 8.105 L6.5 3.905 L10.1 8.105Z M2.9 11.32 L6.5 15.52 L10.1 11.32Z" fill="#b2b2b2"/></svg>
<span class="t" style="top:800.98px;font-size:11px;line-height:14px;letter-spacing:0.053px;left:169px;">25-07-2023 22:30:00.000</span>
<div style="left:340px;top:804.5px;width:223.5px;height:4px;background:#2b2b2b;border-radius:2px;"></div>
<div style="left:329px;top:801px;width:11px;height:11px;background:#484848;border:1px solid #5c5c5c;border-radius:3px;box-sizing:border-box;"></div>
<div style="left:805px;top:796px;width:280px;height:20px;border:1px solid #fff;box-sizing:border-box;"></div>
<span class="t" style="top:799.43px;font-size:11.5px;line-height:15px;left:896.33px;font-weight:bold;font-style:italic;">Vector Sun added</span>
<div style="left:1089px;top:797px;width:298px;height:18px;background:linear-gradient(#ececec,#dcdcdc 45%,#c6c6c6);border-radius:2px;"></div>
<span class="t" style="top:799.73px;font-size:11px;line-height:14px;left:1222.93px;color:#000;">100%</span>
<div style="left:223px;top:109px;width:1154px;height:670px;background:#4d4d4d;overflow:hidden;"><svg style="position:absolute;left:0;top:0" width="1154" height="670" viewBox="223 109 1154 670"><defs><linearGradient id="sg" gradientUnits="userSpaceOnUse" x1="1100" y1="300" x2="420" y2="790"><stop offset="0" stop-color="#94928c"/><stop offset="0.35" stop-color="#8a8882"/><stop offset="0.7" stop-color="#84827d"/><stop offset="1" stop-color="#817f7a"/></linearGradient><filter id="b6" x="-20%" y="-20%" width="140%" height="140%"><feGaussianBlur stdDeviation="6"/></filter><filter id="b3" x="-20%" y="-20%" width="140%" height="140%"><feGaussianBlur stdDeviation="2.5"/></filter><clipPath id="sc"><path d="M223.0 245.3 C239.0 246.1 288.0 246.8 319.0 250.2 C350.0 253.6 377.3 261.2 409.0 266.0 C440.7 270.8 479.0 274.6 509.0 278.8 C539.0 282.9 568.2 287.9 589.0 291.0 C609.8 294.1 614.0 293.9 634.0 297.5 C654.0 301.1 687.8 308.2 709.0 312.5 C730.2 316.8 731.5 315.9 761.0 323.0 C790.5 330.1 844.3 343.7 886.0 355.0 C927.7 366.3 969.3 377.2 1011.0 391.0 C1052.7 404.8 1094.3 420.4 1136.0 437.5 C1177.7 454.6 1220.8 475.2 1261.0 493.8 C1301.2 512.3 1357.7 539.6 1377.0 548.8 L1377 779 L223 779 Z"/></clipPath></defs><path d="M223.0 245.0 C239.0 245.8 288.0 247.5 319.0 249.5 C350.0 251.5 377.3 253.9 409.0 257.0 C440.7 260.1 479.0 263.8 509.0 268.0 C539.0 272.2 568.2 278.3 589.0 282.0 C609.8 285.7 614.0 286.4 634.0 290.0 C654.0 293.6 687.8 299.6 709.0 303.8 C730.2 307.9 731.5 307.7 761.0 315.0 C790.5 322.3 844.3 336.0 886.0 347.5 C927.7 359.0 969.3 370.2 1011.0 383.8 C1052.7 397.3 1094.3 412.5 1136.0 428.8 C1177.7 445.0 1220.8 464.0 1261.0 481.2 C1301.2 498.5 1357.7 524.0 1377.0 532.5 L1377 560 L223 260 Z" fill="#10224a"/><path d="M223.0 245.3 C239.0 246.1 288.0 246.8 319.0 250.2 C350.0 253.6 377.3 261.2 409.0 266.0 C440.7 270.8 479.0 274.6 509.0 278.8 C539.0 282.9 568.2 287.9 589.0 291.0 C609.8 294.1 614.0 293.9 634.0 297.5 C654.0 301.1 687.8 308.2 709.0 312.5 C730.2 316.8 731.5 315.9 761.0 323.0 C790.5 330.1 844.3 343.7 886.0 355.0 C927.7 366.3 969.3 377.2 1011.0 391.0 C1052.7 404.8 1094.3 420.4 1136.0 437.5 C1177.7 454.6 1220.8 475.2 1261.0 493.8 C1301.2 512.3 1357.7 539.6 1377.0 548.8 L1377 779 L223 779 Z" fill="url(#sg)"/><g clip-path="url(#sc)"><path d="M709.0 314.5 C717.7 316.2 731.5 317.9 761.0 325.0 C790.5 332.1 844.3 345.7 886.0 357.0 C927.7 368.3 969.3 379.2 1011.0 393.0 C1052.7 406.8 1094.3 422.4 1136.0 439.5 C1177.7 456.6 1220.8 477.2 1261.0 495.8 C1301.2 514.3 1357.7 541.6 1377.0 550.8" stroke="#a3977f" stroke-width="7" fill="none" opacity="0.85"/><path d="M223.0 246.8 C239.0 247.6 288.0 248.2 319.0 251.7 C350.0 255.1 394.0 264.9 409.0 267.5" stroke="#9a948a" stroke-width="4" fill="none"/><g filter="url(#b6)"><path d="M223 262 L330 268 L470 292 L600 318 L560 330 L420 312 L300 300 L223 300Z" fill="#5f6a70" opacity="0.85"/><path d="M300 268 L420 276 L480 290 L440 298 L330 286Z" fill="#9a9a96" opacity="0.8"/><path d="M223 250 L300 256 L330 266 L260 272 L223 270Z" fill="#8f8d86" opacity="0.9"/><path d="M223 300 L400 315 L560 345 L640 380 L500 370 L350 345 L223 335Z" fill="#7d7f7e" opacity="0.7"/><ellipse cx="660" cy="520" rx="190" ry="110" fill="#767470" opacity="0.55" filter="url(#b6)"/><path d="M760 330 L1000 400 L1250 520 L1377 600 L1377 700 L1100 560 L850 430Z" fill="#9a9892" opacity="0.3"/></g><g filter="url(#b3)"><path d="M300 292 L345 296 L330 302 L290 299Z" fill="#3f4f66" opacity="0.8"/><path d="M450 296 L500 300 L480 306 L445 302Z" fill="#3f4f66" opacity="0.7"/><path d="M560 318 L600 322 L640 332 L600 332Z" fill="#4a5562" opacity="0.7"/></g></g><path d="M615.0 290.6 C629.2 285.3 662.2 271.8 700.0 259.0 C737.8 246.2 818.3 221.5 842.0 214.0" stroke="#fff" stroke-width="1.1" stroke-dasharray="1.3 1.5" fill="none"/><path d="M842.0 214.0 C853.2 211.3 889.5 202.2 909.0 198.0 C928.5 193.8 943.3 191.0 959.0 189.0 C974.7 187.0 989.7 186.2 1003.0 186.0 C1016.3 185.8 1028.0 186.0 1039.0 188.0 C1050.0 190.0 1059.0 193.2 1069.0 198.0 C1079.0 202.8 1089.9 209.4 1099.0 217.0 C1108.1 224.6 1119.6 239.1 1123.7 243.5" stroke="#fff" stroke-width="1.2" fill="none"/><path d="M594 301.9 L544 315" stroke="#b8a400" stroke-width="4"/><path d="M522.5 319.4 L537.1 308.7 L544.6 321.5Z" fill="#ffff00"/><path d="M597.5 296.2 L551 303.2" stroke="#008000" stroke-width="7" stroke-linecap="round"/><path d="M531.5 306.9 L548.5 295.8 L553 312.2Z" fill="#008000"/><path d="M591.5 271.2 L602.1 275 L600.9 322.5 L590.9 318.1Z" fill="#fff"/><path d="M602.1 275 L615 272.5 L614 319.4 L600.9 322.5Z" fill="#9a9a98"/><path d="M591.5 271.2 L604 269 L615 272.5 L602.1 275Z" fill="#e6e2d6"/><path d="M608 297.2 L639 313.1" stroke="#ff0000" stroke-width="7" stroke-linecap="round"/><path d="M654 318.8 L644.5 304 L636 321Z" fill="#ff0000"/><path d="M602 322.5 L601.3 355" stroke="#0000ff" stroke-width="7.5"/><path d="M600.5 374 L592.5 354.2 L609.8 354.2Z" fill="#0000ff"/><line x1="338.0" y1="712.0" x2="315.2" y2="718.4" stroke="#3cb371" stroke-width="1.6"/><path d="M309.4 720.0 L314.5 715.9 L315.9 720.9Z" fill="#3cb371"/><line x1="338.0" y1="712.0" x2="360.6" y2="723.0" stroke="#ff7f50" stroke-width="1.6"/><path d="M366.0 725.6 L359.5 725.3 L361.7 720.6Z" fill="#ff7f50"/><line x1="338.0" y1="712.0" x2="336.1" y2="737.5" stroke="#0000ff" stroke-width="1.6"/><path d="M335.6 743.5 L333.5 737.3 L338.6 737.7Z" fill="#0000ff"/><text x="367.5" y="717.4" font-family="Liberation Sans, sans-serif" font-style="italic" font-size="10" fill="#fff" text-anchor="middle">X</text><text x="322.3" y="712.9" font-family="Liberation Sans, sans-serif" font-style="italic" font-size="10" fill="#fff" text-anchor="middle">Y</text><text x="341.5" y="733.4" font-family="Liberation Sans, sans-serif" font-style="italic" font-size="10" fill="#fff" text-anchor="middle">Z</text></svg></div>
<div style="left:177px;top:19px;width:187.4px;height:143px;background:#1b1b1b;box-shadow:3px 3px 4px rgba(0,0,0,0.55);"></div>
<span class="t" style="top:22.94px;font-size:12px;line-height:16px;letter-spacing:-0.272px;left:205px;color:#fff;">Add SubSystem</span>
<svg class="a" style="left:355.9px;top:26.3px" width="6" height="9"><path d="M0.8 0.8 L0.8 7.6 L4.6 4.2Z" fill="#b0b0b0"/></svg>
<div style="left:181.5px;top:42px;width:178.4px;height:1px;background:#2a2a2a;"></div>
<span class="t" style="top:48.34px;font-size:12px;line-height:16px;letter-spacing:-0.337px;left:205px;color:#fff;">Add Sensors</span>
<svg class="a" style="left:355.9px;top:51.7px" width="6" height="9"><path d="M0.8 0.8 L0.8 7.6 L4.6 4.2Z" fill="#b0b0b0"/></svg>
<span class="t" style="top:71.34px;font-size:12px;line-height:16px;letter-spacing:0.099px;left:205px;color:#fff;">Add Actuators</span>
<svg class="a" style="left:355.9px;top:74.7px" width="6" height="9"><path d="M0.8 0.8 L0.8 7.6 L4.6 4.2Z" fill="#b0b0b0"/></svg>
<div style="left:181.5px;top:89.8px;width:178.4px;height:1px;background:#2a2a2a;"></div>
<span class="t" style="top:96.14px;font-size:12px;line-height:16px;letter-spacing:-0.065px;left:205px;color:#fff;">Ground Station</span>
<div style="left:177px;top:117.25px;width:187.4px;height:22.5px;background:#c8c8c8;"></div>
<span class="t" style="top:120.94px;font-size:12px;line-height:16px;letter-spacing:-0.317px;left:205px;color:#151515;">Vectors</span>
<svg class="a" style="left:355.9px;top:124.3px" width="6" height="9"><path d="M0.8 0.8 L0.8 7.6 L4.6 4.2Z" fill="#333"/></svg>
<span class="t" style="top:144.34px;font-size:12px;line-height:16px;letter-spacing:-0.016px;left:205px;color:#fff;">Manual Joystick Control</span>
<div style="left:364.4px;top:117.3px;width:208.3px;height:116px;background:#1b1b1b;box-shadow:3px 3px 4px rgba(0,0,0,0.55);"></div>
<span class="t" style="top:121.14px;font-size:12px;line-height:16px;letter-spacing:0.116px;left:392.3px;color:#fff;">Magnetic field direction</span>
<div style="left:372.4px;top:122.5px;width:13px;height:13px;background:#1b1b1b;border:1px solid #2d2d2d;box-sizing:border-box;"></div>
<span class="t" style="top:144.24px;font-size:12px;line-height:16px;letter-spacing:0.200px;left:392.3px;color:#fff;">Moon direction</span>
<div style="left:372.4px;top:145.6px;width:13px;height:13px;background:#1b1b1b;border:1px solid #2d2d2d;box-sizing:border-box;"></div>
<span class="t" style="top:167.14px;font-size:12px;line-height:16px;letter-spacing:0.025px;left:392.3px;color:#fff;">Nadir</span>
<div style="left:372.4px;top:168.5px;width:13px;height:13px;background:#1b1b1b;border:1px solid #2d2d2d;box-sizing:border-box;"></div>
<div style="left:364.4px;top:186.1px;width:208.3px;height:23.2px;background:#c8c8c8;"></div>
<span class="t" style="top:190.14px;font-size:12px;line-height:16px;letter-spacing:-0.018px;left:392.3px;color:#151515;">Sun direction</span>
<div style="left:372.4px;top:191.5px;width:13px;height:13px;background:#1a1a1a;"></div>
<svg class="a" style="left:372.4px;top:191.5px" width="13" height="13" viewBox="0 0 12 12"><path d="M2.2 5.6 L3.4 5.2 L5 8.4 C6.2 5.6 7.6 3.2 9.6 1 L10.4 1.4 C8.6 4 7 7 5.6 10.6 L4.6 10.6 Z" fill="#fff"/></svg>
<span class="t" style="top:215.14px;font-size:12px;line-height:16px;letter-spacing:0.026px;left:392.3px;color:#fff;">Custom</span></div></div>
<div class="win" style="left:0px;top:846px;width:1391px;height:788px;"><div style="left:-1px;top:0;width:1400px;height:850px;"><div style="left:0px;top:0px;width:1400px;height:850px;background:#353535;"></div>
<div style="left:0px;top:18px;width:1400px;height:1px;background:#303030;"></div>
<span class="t" style="top:1.14px;font-size:12px;line-height:16px;letter-spacing:-0.396px;left:7.25px;">File</span>
<span class="t" style="top:1.14px;font-size:12px;line-height:16px;letter-spacing:-0.294px;left:39px;">Edit</span>
<span class="t" style="top:1.14px;font-size:12px;line-height:16px;letter-spacing:-0.198px;left:73px;">View</span>
<span class="t" style="top:1.14px;font-size:12px;line-height:16px;letter-spacing:-0.256px;left:112.2px;">Spacecraft</span>
<span class="t" style="top:1.14px;font-size:12px;line-height:16px;letter-spacing:-0.210px;left:181.25px;">Insert</span>
<span class="t" style="top:1.14px;font-size:12px;line-height:16px;letter-spacing:0.119px;left:224.4px;">Orbit</span>
<span class="t" style="top:1.14px;font-size:12px;line-height:16px;letter-spacing:0.239px;left:265.4px;">Attitude</span>
<span class="t" style="top:1.14px;font-size:12px;line-height:16px;letter-spacing:0.013px;left:322.5px;">Environment</span>
<span class="t" style="top:1.14px;font-size:12px;line-height:16px;letter-spacing:-0.130px;left:404.4px;">Disturbance</span>
<span class="t" style="top:1.14px;font-size:12px;line-height:16px;letter-spacing:0.048px;left:481.25px;">Simulation</span>
<span class="t" style="top:1.14px;font-size:12px;line-height:16px;letter-spacing:0.018px;left:552.25px;">Help</span>
<div class="tb" style="left:7px;top:29px;"><svg width="28" height="23" viewBox="0 0 28 23" style="position:absolute;left:-1px;top:-1px"><path d="M13.5 5 L13.5 18 L4 11.5Z M22.5 5 L22.5 18 L13 11.5Z" fill="#000"/></svg></div>
<div class="tb" style="left:44px;top:29px;"><svg width="28" height="23" viewBox="0 0 28 23" style="position:absolute;left:-1px;top:-1px"><path d="M8 4.5 L8 18.5 L21.5 11.5Z" fill="#000"/></svg></div>
<div class="tb" style="left:81px;top:29px;"><svg width="28" height="23" viewBox="0 0 28 23" style="position:absolute;left:-1px;top:-1px"><path d="M9 5 h3.6 v13.5 h-3.6Z M15 5 h3.6 v13.5 h-3.6Z" fill="#000"/></svg></div>
<div class="tb" style="left:118px;top:29px;"><svg width="28" height="23" viewBox="0 0 28 23" style="position:absolute;left:-1px;top:-1px"><path d="M6.5 3.8 h15.5 v15.5 h-15.5Z" fill="#000"/></svg></div>
<div class="tb" style="left:155px;top:29px;"><svg width="28" height="23" viewBox="0 0 28 23" style="position:absolute;left:-1px;top:-1px"><path d="M7 5 L7 18 L16.5 11.5Z M14.5 5 L14.5 18 L24 11.5Z" fill="#000"/></svg></div>
<div class="tb" style="left:202px;top:29px;"><svg width="28" height="23" viewBox="0 0 28 23" style="position:absolute;left:-1px;top:-1px"><path d="M9.5 14.5 L19.5 14.5 L14.5 8.5Z" fill="#000"/></svg></div>
<div class="tb" style="left:239px;top:29px;"><svg width="28" height="23" viewBox="0 0 28 23" style="position:absolute;left:-1px;top:-1px"><path d="M9.5 8.5 L19.5 8.5 L14.5 14.5Z" fill="#000"/></svg></div>
<div style="left:191px;top:28.5px;width:2px;height:24px;background:#f0f0f0;"></div>
<div style="left:332px;top:28.5px;width:2px;height:24px;background:#f0f0f0;"></div>
<div style="left:1108px;top:28.5px;width:2px;height:24px;background:#f0f0f0;"></div>
<div style="left:275.5px;top:30px;width:49px;height:20.5px;background:#191919;border-radius:3px;"></div>
<span class="t" style="top:34.73px;font-size:11px;line-height:14px;letter-spacing:0.341px;left:293.05px;">x1</span>
<span class="t" style="top:33.63px;font-size:11.5px;line-height:15px;letter-spacing:0.496px;left:342px;font-weight:bold;">Start time</span>
<div style="left:407.5px;top:30px;width:167.5px;height:21px;background:#191919;border-radius:3px;"></div>
<div style="left:562px;top:30px;width:13px;height:21px;background:#454545;border:1px solid #5a5a5a;border-radius:0 3px 3px 0;box-sizing:border-box;"></div>
<svg class="a" style="left:562px;top:30px" width="13" height="21"><path d="M2.9 8.93 L6.5 4.73 L10.1 8.93Z M2.9 13.12 L6.5 17.32 L10.1 13.12Z" fill="#b2b2b2"/></svg>
<span class="t" style="top:34.23px;font-size:11px;line-height:14px;letter-spacing:0.053px;left:412px;">25-07-2023 22:30:00.000</span>
<span class="t" style="top:32.55px;font-size:13px;line-height:17px;letter-spacing:-0.064px;left:583px;">Step (s)</span>
<div style="left:635.5px;top:30px;width:58.5px;height:21px;background:#191919;border-radius:3px;"></div>
<div style="left:681px;top:30px;width:13px;height:21px;background:#454545;border:1px solid #5a5a5a;border-radius:0 3px 3px 0;box-sizing:border-box;"></div>
<svg class="a" style="left:681px;top:30px" width="13" height="21"><path d="M2.9 8.93 L6.5 4.73 L10.1 8.93Z M2.9 13.12 L6.5 17.32 L10.1 13.12Z" fill="#b2b2b2"/></svg>
<span class="t" style="top:33.63px;font-size:11px;line-height:14px;letter-spacing:-0.102px;left:640.5px;">1,00</span>
<span class="t" style="top:33.63px;font-size:11.5px;line-height:15px;letter-spacing:0.133px;left:702px;font-weight:bold;">Final time</span>
<div style="left:764.5px;top:30px;width:169.5px;height:21px;background:#191919;border-radius:3px;"></div>
<div style="left:921px;top:30px;width:13px;height:21px;background:#454545;border:1px solid #5a5a5a;border-radius:0 3px 3px 0;box-sizing:border-box;"></div>
<svg class="a" style="left:921px;top:30px" width="13" height="21"><path d="M2.9 8.93 L6.5 4.73 L10.1 8.93Z M2.9 13.12 L6.5 17.32 L10.1 13.12Z" fill="#b2b2b2"/></svg>
<span class="t" style="top:34.23px;font-size:11px;line-height:14px;letter-spacing:0.053px;left:769px;">25-07-2023 22:35:00.000</span>
<span class="t" style="top:33.63px;font-size:11.5px;line-height:15px;letter-spacing:0.052px;left:1118px;font-weight:bold;">Central View Location</span>
<div class="cb" style="left:1247px;top:30px;width:118px;height:20.5px;"></div>
<span class="t" style="top:33.98px;font-size:11px;line-height:14px;left:1250.5px;">SUCHAI</span>
<svg class="a" style="left:1349.5px;top:37.25px" width="10" height="6"><path d="M1 1 L9 1 L5 5.4Z" fill="#b8b8b8"/></svg>
<div style="left:5px;top:58px;width:1383.5px;height:4px;background:linear-gradient(to bottom,#2a2a2a 0,#2a2a2a 1px,#cfcfcf 1px,#cfcfcf 2px,#fff 2px,#fff 3px,#444 3px,#444 4px);"></div>
<div style="left:6px;top:68px;width:199px;height:721px;background:#242322;"></div>
<div style="left:7px;top:69px;width:198px;height:720px;background:#191919;"></div>
<div style="left:7px;top:69px;width:198px;height:19.5px;background:#5a6e94;"></div>
<span class="t" style="top:71.54px;font-size:12px;line-height:16px;left:9px;font-weight:bold;color:#eee;font-family:'DejaVu Serif',serif;">Items</span>
<svg class="a" style="left:14px;top:92px" width="7" height="10"><path d="M1 1 L1 8.4 L5.4 4.7Z" fill="#a8a8a8"/></svg>
<span class="t" style="top:89.44px;font-size:12px;line-height:16px;letter-spacing:-0.305px;left:30px;">Spacecrafts</span>
<span class="t" style="top:104.24px;font-size:12px;line-height:16px;letter-spacing:-0.114px;left:30px;">Ground Stations</span>
<span class="t" style="top:119.14px;font-size:12px;line-height:16px;letter-spacing:-0.285px;left:30px;">External Data</span>
<div style="left:213px;top:99px;width:1174px;height:689px;background:#444;border:1px solid #5a5a5a;box-sizing:border-box;"></div>
<div style="left:213px;top:71px;width:106px;height:28px;background:#3c3c3c;border:1px solid #525252;border-bottom:none;border-radius:3px 3px 0 0;box-sizing:border-box;"></div>
<span class="t" style="top:79.13px;font-size:11px;line-height:14px;letter-spacing:-0.070px;left:223px;">Groundtrack</span>
<svg class="a" style="left:289.3px;top:78.6px" width="14" height="13" viewBox="0 0 14 13"><path d="M3.1 0.2 L7 6.2" stroke="#2c2c2c" stroke-width="0.7" fill="none"/><path d="M6.5 6 C8 8.2 10 10.5 11.6 11.7 C12.5 12.2 13.2 11.4 12.7 10.6 C11.4 9 9.4 7.3 7.5 5.5 Z" fill="#1b1b1b"/><path d="M0.1 12.1 L1.3 12 C4.2 10 7.6 6.9 11.9 2.3 C12.6 1.4 12.3 0.3 11.3 0.2 C10.4 0.1 9.8 0.8 9 1.8 C6 5.6 3 9.1 0.1 12.1 Z" fill="#000"/></svg>
<div style="left:320px;top:71px;width:87px;height:28px;background:#3c3c3c;border:1px solid #525252;border-bottom:none;border-radius:3px 3px 0 0;box-sizing:border-box;"></div>
<span class="t" style="top:79.13px;font-size:11px;line-height:14px;letter-spacing:-0.169px;left:331px;">3D Orbit</span>
<svg class="a" style="left:377.3px;top:78.6px" width="14" height="13" viewBox="0 0 14 13"><path d="M3.1 0.2 L7 6.2" stroke="#2c2c2c" stroke-width="0.7" fill="none"/><path d="M6.5 6 C8 8.2 10 10.5 11.6 11.7 C12.5 12.2 13.2 11.4 12.7 10.6 C11.4 9 9.4 7.3 7.5 5.5 Z" fill="#1b1b1b"/><path d="M0.1 12.1 L1.3 12 C4.2 10 7.6 6.9 11.9 2.3 C12.6 1.4 12.3 0.3 11.3 0.2 C10.4 0.1 9.8 0.8 9 1.8 C6 5.6 3 9.1 0.1 12.1 Z" fill="#000"/></svg>
<div style="left:408px;top:71px;width:102px;height:28px;background:#3c3c3c;border:1px solid #525252;border-bottom:none;border-radius:3px 3px 0 0;box-sizing:border-box;"></div>
<span class="t" style="top:79.13px;font-size:11px;line-height:14px;letter-spacing:0.044px;left:418.8px;">3D Attitude</span>
<svg class="a" style="left:480.3px;top:78.6px" width="14" height="13" viewBox="0 0 14 13"><path d="M3.1 0.2 L7 6.2" stroke="#2c2c2c" stroke-width="0.7" fill="none"/><path d="M6.5 6 C8 8.2 10 10.5 11.6 11.7 C12.5 12.2 13.2 11.4 12.7 10.6 C11.4 9 9.4 7.3 7.5 5.5 Z" fill="#1b1b1b"/><path d="M0.1 12.1 L1.3 12 C4.2 10 7.6 6.9 11.9 2.3 C12.6 1.4 12.3 0.3 11.3 0.2 C10.4 0.1 9.8 0.8 9 1.8 C6 5.6 3 9.1 0.1 12.1 Z" fill="#000"/></svg>
<div style="left:511px;top:69px;width:69px;height:31px;background:#444;border:1px solid #5a5a5a;border-bottom:none;border-radius:3px 3px 0 0;box-sizing:border-box;"></div>
<span class="t" style="top:78.33px;font-size:11px;line-height:14px;letter-spacing:-0.231px;left:521.3px;">Plots</span>
<svg class="a" style="left:551.3px;top:77.9px" width="14" height="13" viewBox="0 0 14 13"><path d="M3.1 0.2 L7 6.2" stroke="#2c2c2c" stroke-width="0.7" fill="none"/><path d="M6.5 6 C8 8.2 10 10.5 11.6 11.7 C12.5 12.2 13.2 11.4 12.7 10.6 C11.4 9 9.4 7.3 7.5 5.5 Z" fill="#1b1b1b"/><path d="M0.1 12.1 L1.3 12 C4.2 10 7.6 6.9 11.9 2.3 C12.6 1.4 12.3 0.3 11.3 0.2 C10.4 0.1 9.8 0.8 9 1.8 C6 5.6 3 9.1 0.1 12.1 Z" fill="#000"/></svg>
<span class="t" style="top:109.03px;font-size:11.5px;line-height:15px;letter-spacing:0.308px;left:308.85px;font-weight:bold;">Data variables</span>
<div style="left:223px;top:129.3px;width:254px;height:2px;background:#fff;"></div>
<span class="t" style="top:139.33px;font-size:11px;line-height:14px;letter-spacing:0.042px;left:222.6px;">Dataset</span>
<span class="t" style="top:164.23px;font-size:11px;line-height:14px;letter-spacing:0.170px;left:222.6px;">Item:</span>
<div class="cb" style="left:280.4px;top:159px;width:196.2px;height:22px;"></div>
<span class="t" style="top:163.53px;font-size:11px;line-height:14px;letter-spacing:-0.527px;left:283.9px;">SUCHAI</span>
<svg class="a" style="left:460.4px;top:167px" width="10" height="6"><path d="M1 1 L9 1 L5 5.4Z" fill="#b8b8b8"/></svg>
<div style="left:223px;top:188.4px;width:254px;height:2px;background:#fff;"></div>
<span class="t" style="top:203.33px;font-size:11px;line-height:14px;letter-spacing:-0.230px;left:222.6px;">X axis:</span>
<div class="cb" style="left:280.4px;top:199px;width:196.2px;height:21px;"></div>
<span class="t" style="top:203.03px;font-size:11px;line-height:14px;letter-spacing:-0.090px;left:284.7px;">time[sec]</span>
<svg class="a" style="left:460.4px;top:206.5px" width="10" height="6"><path d="M1 1 L9 1 L5 5.4Z" fill="#b8b8b8"/></svg>
<span class="t" style="top:226.73px;font-size:11px;line-height:14px;letter-spacing:-0.376px;left:324.75px;">Y axis</span>
<div style="left:235px;top:247px;width:217px;height:409.6px;background:#191919;"></div>
<div style="left:238.8px;top:249.5px;width:13px;height:13px;background:#161616;border:1px solid #232323;box-sizing:border-box;"></div>
<span class="t" style="top:246.95px;font-size:13px;line-height:17px;letter-spacing:0.061px;left:257.8px;color:#fff;">roll_lvlh [rad]</span>
<div style="left:238.8px;top:266.5px;width:13px;height:13px;background:#161616;border:1px solid #232323;box-sizing:border-box;"></div>
<span class="t" style="top:263.95px;font-size:13px;line-height:17px;letter-spacing:-0.066px;left:257.8px;color:#fff;">torque_t_b(X)[Nm]</span>
<div style="left:238.8px;top:283.5px;width:13px;height:13px;background:#161616;border:1px solid #232323;box-sizing:border-box;"></div>
<span class="t" style="top:280.95px;font-size:13px;line-height:17px;letter-spacing:-0.113px;left:257.8px;color:#fff;">torque_t_b(Y)[Nm]</span>
<div style="left:238.8px;top:300.5px;width:13px;height:13px;background:#161616;border:1px solid #232323;box-sizing:border-box;"></div>
<span class="t" style="top:297.95px;font-size:13px;line-height:17px;letter-spacing:-0.070px;left:257.8px;color:#fff;">torque_t_b(Z)[Nm]</span>
<div style="left:238.8px;top:317.5px;width:13px;height:13px;background:#161616;border:1px solid #232323;box-sizing:border-box;"></div>
<span class="t" style="top:314.95px;font-size:13px;line-height:17px;letter-spacing:-0.006px;left:257.8px;color:#fff;">h_total[Nms]</span>
<div style="left:238.8px;top:334.5px;width:13px;height:13px;background:#161616;border:1px solid #232323;box-sizing:border-box;"></div>
<span class="t" style="top:331.95px;font-size:13px;line-height:17px;letter-spacing:-0.439px;left:257.8px;color:#fff;">mag_x_i[nT]</span>
<div style="left:238.8px;top:351.5px;width:13px;height:13px;background:#161616;border:1px solid #232323;box-sizing:border-box;"></div>
<span class="t" style="top:348.95px;font-size:13px;line-height:17px;letter-spacing:-0.439px;left:257.8px;color:#fff;">mag_y_i[nT]</span>
<div style="left:238.8px;top:368.5px;width:13px;height:13px;background:#161616;border:1px solid #232323;box-sizing:border-box;"></div>
<span class="t" style="top:365.95px;font-size:13px;line-height:17px;letter-spacing:-0.439px;left:257.8px;color:#fff;">mag_z_i[nT]</span>
<div style="left:238.8px;top:385.5px;width:13px;height:13px;background:#161616;border:1px solid #232323;box-sizing:border-box;"></div>
<svg class="a" style="left:238.8px;top:385.5px" width="13" height="13" viewBox="0 0 12 12"><path d="M2.2 5.6 L3.4 5.2 L5 8.4 C6.2 5.6 7.6 3.2 9.6 1 L10.4 1.4 C8.6 4 7 7 5.6 10.6 L4.6 10.6 Z" fill="#fff"/></svg>
<span class="t" style="top:382.95px;font-size:13px;line-height:17px;letter-spacing:-0.415px;left:257.8px;color:#fff;">mag_x_b[nT]</span>
<div style="left:235px;top:400px;width:216px;height:16.8px;background:linear-gradient(#cdcdcd,#b9b9b9);"></div>
<div style="left:238.8px;top:402.5px;width:13px;height:13px;background:#161616;border:1px solid #232323;box-sizing:border-box;"></div>
<svg class="a" style="left:238.8px;top:402.5px" width="13" height="13" viewBox="0 0 12 12"><path d="M2.2 5.6 L3.4 5.2 L5 8.4 C6.2 5.6 7.6 3.2 9.6 1 L10.4 1.4 C8.6 4 7 7 5.6 10.6 L4.6 10.6 Z" fill="#fff"/></svg>
<span class="t" style="top:399.95px;font-size:13px;line-height:17px;letter-spacing:-0.415px;left:257.8px;color:#4c4c4c;">mag_y_b[nT]</span>
<div style="left:238.8px;top:419.5px;width:13px;height:13px;background:#161616;border:1px solid #232323;box-sizing:border-box;"></div>
<svg class="a" style="left:238.8px;top:419.5px" width="13" height="13" viewBox="0 0 12 12"><path d="M2.2 5.6 L3.4 5.2 L5 8.4 C6.2 5.6 7.6 3.2 9.6 1 L10.4 1.4 C8.6 4 7 7 5.6 10.6 L4.6 10.6 Z" fill="#fff"/></svg>
<span class="t" style="top:416.95px;font-size:13px;line-height:17px;letter-spacing:-0.415px;left:257.8px;color:#fff;">mag_z_b[nT]</span>
<div style="left:238.8px;top:436.5px;width:13px;height:13px;background:#161616;border:1px solid #232323;box-sizing:border-box;"></div>
<span class="t" style="top:433.95px;font-size:13px;line-height:17px;letter-spacing:-0.174px;left:257.8px;color:#fff;">sat_position_i(X)[m]</span>
<div style="left:238.8px;top:453.5px;width:13px;height:13px;background:#161616;border:1px solid #232323;box-sizing:border-box;"></div>
<span class="t" style="top:450.95px;font-size:13px;line-height:17px;letter-spacing:-0.219px;left:257.8px;color:#fff;">sat_position_i(Y)[m]</span>
<div style="left:238.8px;top:470.5px;width:13px;height:13px;background:#161616;border:1px solid #232323;box-sizing:border-box;"></div>
<span class="t" style="top:467.95px;font-size:13px;line-height:17px;letter-spacing:-0.182px;left:257.8px;color:#fff;">sat_position_i(Z)[m]</span>
<div style="left:238.8px;top:487.5px;width:13px;height:13px;background:#161616;border:1px solid #232323;box-sizing:border-box;"></div>
<span class="t" style="top:484.95px;font-size:13px;line-height:17px;letter-spacing:-0.251px;left:257.8px;color:#fff;">sat_velocity_i(X)[m/s]</span>
<div style="left:238.8px;top:504.5px;width:13px;height:13px;background:#161616;border:1px solid #232323;box-sizing:border-box;"></div>
<span class="t" style="top:501.95px;font-size:13px;line-height:17px;letter-spacing:-0.297px;left:257.8px;color:#fff;">sat_velocity_i(Y)[m/s]</span>
<div style="left:238.8px;top:521.5px;width:13px;height:13px;background:#161616;border:1px solid #232323;box-sizing:border-box;"></div>
<span class="t" style="top:518.95px;font-size:13px;line-height:17px;letter-spacing:-0.263px;left:257.8px;color:#fff;">sat_velocity_i(Z)[m/s]</span>
<div style="left:238.8px;top:538.5px;width:13px;height:13px;background:#161616;border:1px solid #232323;box-sizing:border-box;"></div>
<span class="t" style="top:535.95px;font-size:13px;line-height:17px;letter-spacing:0.208px;left:257.8px;color:#fff;">lat[rad]</span>
<div style="left:238.8px;top:555.5px;width:13px;height:13px;background:#161616;border:1px solid #232323;box-sizing:border-box;"></div>
<span class="t" style="top:552.95px;font-size:13px;line-height:17px;letter-spacing:0.243px;left:257.8px;color:#fff;">lon[rad]</span>
<div style="left:238.8px;top:572.5px;width:13px;height:13px;background:#161616;border:1px solid #232323;box-sizing:border-box;"></div>
<span class="t" style="top:569.95px;font-size:13px;line-height:17px;letter-spacing:0.070px;left:257.8px;color:#fff;">alt[m]</span>
<div style="left:238.8px;top:589.5px;width:13px;height:13px;background:#161616;border:1px solid #232323;box-sizing:border-box;"></div>
<span class="t" style="top:586.95px;font-size:13px;line-height:17px;letter-spacing:-0.364px;left:257.8px;color:#fff;">Earth_pos_from_sc_i(X)[m]</span>
<div style="left:238.8px;top:606.5px;width:13px;height:13px;background:#161616;border:1px solid #232323;box-sizing:border-box;"></div>
<span class="t" style="top:603.95px;font-size:13px;line-height:17px;letter-spacing:-0.396px;left:257.8px;color:#fff;">Earth_pos_from_sc_i(Y)[m]</span>
<div style="left:238.8px;top:623.5px;width:13px;height:13px;background:#161616;border:1px solid #232323;box-sizing:border-box;"></div>
<span class="t" style="top:620.95px;font-size:13px;line-height:17px;letter-spacing:-0.367px;left:257.8px;color:#fff;">Earth_pos_from_sc_i(Z)[m]</span>
<div style="left:238.8px;top:640.5px;width:13px;height:13px;background:#161616;border:1px solid #232323;box-sizing:border-box;"></div>
<span class="t" style="top:637.95px;font-size:13px;line-height:17px;letter-spacing:-0.355px;left:257.8px;color:#fff;">Earth_vel_from_sc_i(X)[m/s]</span>
<div style="left:452px;top:247px;width:13px;height:409.6px;background:#3b3b3b;"></div>
<div style="left:452px;top:247px;width:13px;height:13px;background:#444;border:1px solid #555;box-sizing:border-box;"></div>
<div style="left:452px;top:643.6px;width:13px;height:13px;background:#444;border:1px solid #555;box-sizing:border-box;"></div>
<div style="left:452px;top:354px;width:13px;height:122px;background:#474747;border:1px solid #565656;box-sizing:border-box;"></div>
<svg class="a" style="left:454.3px;top:250.5px" width="9" height="6"><path d="M0.6 5 L8.2 5 L4.4 0.8Z" fill="#b8b8b8"/></svg>
<svg class="a" style="left:454.3px;top:647.4px" width="9" height="6"><path d="M0.6 1 L8.2 1 L4.4 5.2Z" fill="#b8b8b8"/></svg>
<div class="cb" style="left:223.4px;top:728.8px;width:79.2px;height:19.6px;"></div>
<span class="t" style="top:731.93px;font-size:11px;line-height:14px;letter-spacing:-0.297px;left:250.75px;">Keep</span>
<div class="cb" style="left:310px;top:728.8px;width:79.4px;height:19.6px;"></div>
<span class="t" style="top:731.93px;font-size:11px;line-height:14px;letter-spacing:-0.243px;left:329.95px;">Remove</span>
<div class="cb" style="left:397.5px;top:728.8px;width:79.2px;height:19.6px;"></div>
<span class="t" style="top:731.93px;font-size:11px;line-height:14px;letter-spacing:-0.261px;left:418.10px;">Clear all</span>
<div class="cb" style="left:223.4px;top:756.8px;width:253.3px;height:21.5px;"></div>
<span class="t" style="top:760.88px;font-size:11px;line-height:14px;letter-spacing:0.151px;left:330.80px;">Save ...</span>
<div style="left:496px;top:117.8px;width:872.3px;height:651.6px;background:#dfdfdf;"><svg style="position:absolute;left:0;top:0" width="872.3" height="651.6" viewBox="496 117.8 872.3 651.6"><line x1="571.8" y1="128.0" x2="571.8" y2="740.0" stroke="#8c8c8c" stroke-width="0.8"/><line x1="622.4" y1="128.0" x2="622.4" y2="740.0" stroke="#b0b0b0" stroke-width="0.8"/><line x1="673.0" y1="128.0" x2="673.0" y2="740.0" stroke="#b0b0b0" stroke-width="0.8"/><line x1="723.5" y1="128.0" x2="723.5" y2="740.0" stroke="#b0b0b0" stroke-width="0.8"/><line x1="774.1" y1="128.0" x2="774.1" y2="740.0" stroke="#b0b0b0" stroke-width="0.8"/><line x1="824.7" y1="128.0" x2="824.7" y2="740.0" stroke="#b0b0b0" stroke-width="0.8"/><line x1="875.3" y1="128.0" x2="875.3" y2="740.0" stroke="#b0b0b0" stroke-width="0.8"/><line x1="925.9" y1="128.0" x2="925.9" y2="740.0" stroke="#b0b0b0" stroke-width="0.8"/><line x1="976.4" y1="128.0" x2="976.4" y2="740.0" stroke="#b0b0b0" stroke-width="0.8"/><line x1="1027.0" y1="128.0" x2="1027.0" y2="740.0" stroke="#b0b0b0" stroke-width="0.8"/><line x1="1077.6" y1="128.0" x2="1077.6" y2="740.0" stroke="#4a4a4a" stroke-width="0.8"/><line x1="1128.2" y1="128.0" x2="1128.2" y2="740.0" stroke="#b0b0b0" stroke-width="0.8"/><line x1="1178.8" y1="128.0" x2="1178.8" y2="740.0" stroke="#b0b0b0" stroke-width="0.8"/><line x1="1229.3" y1="128.0" x2="1229.3" y2="740.0" stroke="#b0b0b0" stroke-width="0.8"/><line x1="1279.9" y1="128.0" x2="1279.9" y2="740.0" stroke="#b0b0b0" stroke-width="0.8"/><line x1="1330.5" y1="128.0" x2="1330.5" y2="740.0" stroke="#b0b0b0" stroke-width="0.8"/><line x1="545.2" y1="178.9" x2="1358.8" y2="178.9" stroke="#505050" stroke-width="1"/><line x1="545.2" y1="309.9" x2="1358.8" y2="309.9" stroke="#7a7a7a" stroke-width="1"/><line x1="545.2" y1="440.9" x2="1358.8" y2="440.9" stroke="#7a7a7a" stroke-width="1"/><line x1="545.2" y1="571.9" x2="1358.8" y2="571.9" stroke="#7a7a7a" stroke-width="1"/><line x1="545.2" y1="702.9" x2="1358.8" y2="702.9" stroke="#7a7a7a" stroke-width="1"/><line x1="545.2" y1="128.0" x2="545.2" y2="740.7" stroke="#000" stroke-width="1.3"/><line x1="544.6" y1="740.0" x2="1358.8" y2="740.0" stroke="#000" stroke-width="1.3"/><polyline points="571.8,716.4 597.1,707.2 622.4,698.0 647.7,688.9 673.0,679.7 698.2,670.6 723.5,661.5 748.8,652.5 774.1,643.4 799.4,634.4 824.7,625.4 850.0,616.4 875.3,607.4 900.6,598.4 925.9,589.5 951.1,580.6 976.4,571.7 1001.7,562.8 1027.0,553.9 1052.3,545.1 1077.6,536.3 1102.9,527.4 1128.2,518.7 1153.5,509.9 1178.8,501.1 1204.0,492.4 1229.3,483.7 1254.6,475.0 1279.9,466.3 1305.2,457.7 1330.5,449.1" fill="none" stroke="#008000" stroke-width="1.6"/><polyline points="571.8,381.2 584.4,384.9 597.1,388.5 609.7,392.1 622.4,395.5 635.0,398.9 647.7,402.3 660.3,405.5 673.0,408.7 685.6,411.8 698.2,414.8 710.9,417.8 723.5,420.7 736.2,423.5 748.8,426.3 761.5,428.9 774.1,431.5 786.8,434.1 799.4,436.5 812.1,438.9 824.7,441.3 837.3,443.5 850.0,445.7 862.6,447.8 875.3,449.9 887.9,451.9 900.6,453.8 913.2,455.7 925.9,457.5 938.5,459.2 951.1,460.9 963.8,462.5 976.4,464.0 989.1,465.5 1001.7,466.9 1014.4,468.2 1027.0,469.5 1039.7,470.7 1052.3,471.9 1065.0,473.0 1077.6,474.0 1090.2,475.0 1102.9,475.9 1115.5,476.8 1128.2,477.6 1140.8,478.3 1153.5,479.0 1166.1,479.6 1178.8,480.2 1191.4,480.7 1204.0,481.2 1216.7,481.6 1229.3,481.9 1242.0,482.2 1254.6,482.4 1267.3,482.6 1279.9,482.7 1292.6,482.8 1305.2,482.8 1317.9,482.8 1330.5,482.7" fill="none" stroke="#ff0000" stroke-width="1.6"/><polyline points="571.8,151.4 597.1,155.0 622.4,158.6 647.7,162.2 673.0,165.6 698.2,169.0 723.5,172.4 748.8,175.7 774.1,178.9 799.4,182.1 824.7,185.2 850.0,188.2 875.3,191.2 900.6,194.1 925.9,197.0 951.1,199.8 976.4,202.5 1001.7,205.2 1027.0,207.8 1052.3,210.4 1077.6,212.9 1102.9,215.3 1128.2,217.7 1153.5,220.0 1178.8,222.3 1204.0,224.5 1229.3,226.6 1254.6,228.7 1279.9,230.7 1305.2,232.6 1330.5,234.5" fill="none" stroke="#0000ff" stroke-width="1.6"/><line x1="582.7" y1="178.3" x2="605" y2="178.3" stroke="#0000ff" stroke-width="1.6"/><line x1="582.7" y1="200.3" x2="605" y2="200.3" stroke="#ff0000" stroke-width="1.6"/><line x1="582.7" y1="222.3" x2="605" y2="222.3" stroke="#008000" stroke-width="1.6"/></svg></div>
<span class="t" style="top:171.04px;font-size:12px;line-height:16px;letter-spacing:0.195px;left:613px;color:#111;">mag_x_b[nT] (SUCHAI)</span>
<span class="t" style="top:193.04px;font-size:12px;line-height:16px;letter-spacing:0.195px;left:613px;color:#111;">mag_y_b[nT] (SUCHAI)</span>
<span class="t" style="top:215.04px;font-size:12px;line-height:16px;letter-spacing:0.195px;left:613px;color:#111;">mag_z_b[nT] (SUCHAI)</span>
<span class="t" style="top:742.33px;font-size:11px;line-height:14px;left:568.74px;color:#000;">0</span>
<span class="t" style="top:742.33px;font-size:11px;line-height:14px;left:616.26px;color:#000;">20</span>
<span class="t" style="top:742.33px;font-size:11px;line-height:14px;left:666.84px;color:#000;">40</span>
<span class="t" style="top:742.33px;font-size:11px;line-height:14px;left:717.42px;color:#000;">60</span>
<span class="t" style="top:742.33px;font-size:11px;line-height:14px;left:768.00px;color:#000;">80</span>
<span class="t" style="top:742.33px;font-size:11px;line-height:14px;left:815.52px;color:#000;">100</span>
<span class="t" style="top:742.33px;font-size:11px;line-height:14px;left:866.10px;color:#000;">120</span>
<span class="t" style="top:742.33px;font-size:11px;line-height:14px;left:916.68px;color:#000;">140</span>
<span class="t" style="top:742.33px;font-size:11px;line-height:14px;left:967.26px;color:#000;">160</span>
<span class="t" style="top:742.33px;font-size:11px;line-height:14px;left:1017.84px;color:#000;">180</span>
<span class="t" style="top:742.33px;font-size:11px;line-height:14px;left:1068.42px;color:#000;">200</span>
<span class="t" style="top:742.33px;font-size:11px;line-height:14px;left:1119.00px;color:#000;">220</span>
<span class="t" style="top:742.33px;font-size:11px;line-height:14px;left:1169.58px;color:#000;">240</span>
<span class="t" style="top:742.33px;font-size:11px;line-height:14px;left:1220.16px;color:#000;">260</span>
<span class="t" style="top:742.33px;font-size:11px;line-height:14px;left:1270.74px;color:#000;">280</span>
<span class="t" style="top:742.33px;font-size:11px;line-height:14px;left:1321.32px;color:#000;">300</span>
<span class="t" style="top:172.43px;font-size:11px;line-height:14px;left:532.88px;color:#000;">0</span>
<span class="t" style="top:303.43px;font-size:11px;line-height:14px;left:504.75px;color:#000;">-10000</span>
<span class="t" style="top:434.43px;font-size:11px;line-height:14px;left:504.75px;color:#000;">-20000</span>
<span class="t" style="top:565.43px;font-size:11px;line-height:14px;left:504.75px;color:#000;">-30000</span>
<span class="t" style="top:696.43px;font-size:11px;line-height:14px;left:504.75px;color:#000;">-40000</span></div></div>
<div class="win" style="left:1388px;top:845px;width:1394px;height:789px;"><div style="left:0px;top:0;width:1400px;height:850px;"><div style="left:0px;top:0px;width:1400px;height:850px;background:#353535;"></div>
<div style="left:0px;top:18px;width:1400px;height:1px;background:#303030;"></div>
<span class="t" style="top:1.14px;font-size:12px;line-height:16px;letter-spacing:-0.396px;left:7.25px;">File</span>
<span class="t" style="top:1.14px;font-size:12px;line-height:16px;letter-spacing:-0.294px;left:39px;">Edit</span>
<span class="t" style="top:1.14px;font-size:12px;line-height:16px;letter-spacing:-0.198px;left:73px;">View</span>
<span class="t" style="top:1.14px;font-size:12px;line-height:16px;letter-spacing:-0.256px;left:112.2px;">Spacecraft</span>
<span class="t" style="top:1.14px;font-size:12px;line-height:16px;letter-spacing:-0.210px;left:181.25px;">Insert</span>
<span class="t" style="top:1.14px;font-size:12px;line-height:16px;letter-spacing:0.119px;left:224.4px;">Orbit</span>
<span class="t" style="top:1.14px;font-size:12px;line-height:16px;letter-spacing:0.239px;left:265.4px;">Attitude</span>
<span class="t" style="top:1.14px;font-size:12px;line-height:16px;letter-spacing:0.013px;left:322.5px;">Environment</span>
<span class="t" style="top:1.14px;font-size:12px;line-height:16px;letter-spacing:-0.130px;left:404.4px;">Disturbance</span>
<span class="t" style="top:1.14px;font-size:12px;line-height:16px;letter-spacing:0.048px;left:481.25px;">Simulation</span>
<span class="t" style="top:1.14px;font-size:12px;line-height:16px;letter-spacing:0.018px;left:552.25px;">Help</span>
<div class="tb" style="left:7px;top:29px;"><svg width="28" height="23" viewBox="0 0 28 23" style="position:absolute;left:-1px;top:-1px"><path d="M13.5 5 L13.5 18 L4 11.5Z M22.5 5 L22.5 18 L13 11.5Z" fill="#000"/></svg></div>
<div class="tb" style="left:44px;top:29px;"><svg width="28" height="23" viewBox="0 0 28 23" style="position:absolute;left:-1px;top:-1px"><path d="M8 4.5 L8 18.5 L21.5 11.5Z" fill="#000"/></svg></div>
<div class="tb" style="left:81px;top:29px;"><svg width="28" height="23" viewBox="0 0 28 23" style="position:absolute;left:-1px;top:-1px"><path d="M9 5 h3.6 v13.5 h-3.6Z M15 5 h3.6 v13.5 h-3.6Z" fill="#000"/></svg></div>
<div class="tb" style="left:118px;top:29px;"><svg width="28" height="23" viewBox="0 0 28 23" style="position:absolute;left:-1px;top:-1px"><path d="M6.5 3.8 h15.5 v15.5 h-15.5Z" fill="#000"/></svg></div>
<div class="tb" style="left:155px;top:29px;"><svg width="28" height="23" viewBox="0 0 28 23" style="position:absolute;left:-1px;top:-1px"><path d="M7 5 L7 18 L16.5 11.5Z M14.5 5 L14.5 18 L24 11.5Z" fill="#000"/></svg></div>
<div class="tb" style="left:202px;top:29px;"><svg width="28" height="23" viewBox="0 0 28 23" style="position:absolute;left:-1px;top:-1px"><path d="M9.5 14.5 L19.5 14.5 L14.5 8.5Z" fill="#000"/></svg></div>
<div class="tb" style="left:239px;top:29px;"><svg width="28" height="23" viewBox="0 0 28 23" style="position:absolute;left:-1px;top:-1px"><path d="M9.5 8.5 L19.5 8.5 L14.5 14.5Z" fill="#000"/></svg></div>
<div style="left:191px;top:28.5px;width:2px;height:24px;background:#f0f0f0;"></div>
<div style="left:332px;top:28.5px;width:2px;height:24px;background:#f0f0f0;"></div>
<div style="left:1108px;top:28.5px;width:2px;height:24px;background:#f0f0f0;"></div>
<div style="left:275.5px;top:30px;width:49px;height:20.5px;background:#191919;border-radius:3px;"></div>
<span class="t" style="top:34.73px;font-size:11px;line-height:14px;letter-spacing:0.341px;left:293.05px;">x1</span>
<span class="t" style="top:33.63px;font-size:11.5px;line-height:15px;letter-spacing:0.496px;left:342px;font-weight:bold;">Start time</span>
<div style="left:407.5px;top:30px;width:167.5px;height:21px;background:#191919;border-radius:3px;"></div>
<div style="left:562px;top:30px;width:13px;height:21px;background:#454545;border:1px solid #5a5a5a;border-radius:0 3px 3px 0;box-sizing:border-box;"></div>
<svg class="a" style="left:562px;top:30px" width="13" height="21"><path d="M2.9 8.93 L6.5 4.73 L10.1 8.93Z M2.9 13.12 L6.5 17.32 L10.1 13.12Z" fill="#b2b2b2"/></svg>
<span class="t" style="top:34.23px;font-size:11px;line-height:14px;letter-spacing:0.053px;left:412px;">25-07-2023 22:30:00.000</span>
<span class="t" style="top:32.55px;font-size:13px;line-height:17px;letter-spacing:-0.064px;left:583px;">Step (s)</span>
<div style="left:635.5px;top:30px;width:58.5px;height:21px;background:#191919;border-radius:3px;"></div>
<div style="left:681px;top:30px;width:13px;height:21px;background:#454545;border:1px solid #5a5a5a;border-radius:0 3px 3px 0;box-sizing:border-box;"></div>
<svg class="a" style="left:681px;top:30px" width="13" height="21"><path d="M2.9 8.93 L6.5 4.73 L10.1 8.93Z M2.9 13.12 L6.5 17.32 L10.1 13.12Z" fill="#b2b2b2"/></svg>
<span class="t" style="top:33.63px;font-size:11px;line-height:14px;letter-spacing:-0.102px;left:640.5px;">1,00</span>
<span class="t" style="top:33.63px;font-size:11.5px;line-height:15px;letter-spacing:0.133px;left:702px;font-weight:bold;">Final time</span>
<div style="left:764.5px;top:30px;width:169.5px;height:21px;background:#191919;border-radius:3px;"></div>
<div style="left:921px;top:30px;width:13px;height:21px;background:#454545;border:1px solid #5a5a5a;border-radius:0 3px 3px 0;box-sizing:border-box;"></div>
<svg class="a" style="left:921px;top:30px" width="13" height="21"><path d="M2.9 8.93 L6.5 4.73 L10.1 8.93Z M2.9 13.12 L6.5 17.32 L10.1 13.12Z" fill="#b2b2b2"/></svg>
<span class="t" style="top:34.23px;font-size:11px;line-height:14px;letter-spacing:0.053px;left:769px;">25-07-2023 22:35:00.000</span>
<span class="t" style="top:33.63px;font-size:11.5px;line-height:15px;letter-spacing:0.052px;left:1118px;font-weight:bold;">Central View Location</span>
<div class="cb" style="left:1247px;top:30px;width:118px;height:20.5px;"></div>
<span class="t" style="top:33.98px;font-size:11px;line-height:14px;left:1250.5px;">Earth</span>
<svg class="a" style="left:1349.5px;top:37.25px" width="10" height="6"><path d="M1 1 L9 1 L5 5.4Z" fill="#b8b8b8"/></svg>
<div style="left:5px;top:58px;width:1383.5px;height:4px;background:linear-gradient(to bottom,#2a2a2a 0,#2a2a2a 1px,#cfcfcf 1px,#cfcfcf 2px,#fff 2px,#fff 3px,#444 3px,#444 4px);"></div>
<div style="left:6px;top:68px;width:199px;height:721px;background:#242322;"></div>
<div style="left:7px;top:69px;width:198px;height:720px;background:#191919;"></div>
<div style="left:7px;top:69px;width:198px;height:19.5px;background:#5a6e94;"></div>
<span class="t" style="top:71.54px;font-size:12px;line-height:16px;left:9px;font-weight:bold;color:#eee;font-family:'DejaVu Serif',serif;">Items</span>
<svg class="a" style="left:14px;top:92px" width="7" height="10"><path d="M1 1 L1 8.4 L5.4 4.7Z" fill="#a8a8a8"/></svg>
<span class="t" style="top:89.44px;font-size:12px;line-height:16px;letter-spacing:-0.305px;left:30px;">Spacecrafts</span>
<span class="t" style="top:104.24px;font-size:12px;line-height:16px;letter-spacing:-0.114px;left:30px;">Ground Stations</span>
<span class="t" style="top:119.14px;font-size:12px;line-height:16px;letter-spacing:-0.285px;left:30px;">External Data</span>
<div style="left:213px;top:99px;width:1174px;height:689px;background:#444;border:1px solid #5a5a5a;box-sizing:border-box;"></div>
<div style="left:213px;top:71px;width:106px;height:28px;background:#3c3c3c;border:1px solid #525252;border-bottom:none;border-radius:3px 3px 0 0;box-sizing:border-box;"></div>
<span class="t" style="top:79.13px;font-size:11px;line-height:14px;letter-spacing:-0.070px;left:223px;">Groundtrack</span>
<svg class="a" style="left:289.3px;top:78.6px" width="14" height="13" viewBox="0 0 14 13"><path d="M3.1 0.2 L7 6.2" stroke="#2c2c2c" stroke-width="0.7" fill="none"/><path d="M6.5 6 C8 8.2 10 10.5 11.6 11.7 C12.5 12.2 13.2 11.4 12.7 10.6 C11.4 9 9.4 7.3 7.5 5.5 Z" fill="#1b1b1b"/><path d="M0.1 12.1 L1.3 12 C4.2 10 7.6 6.9 11.9 2.3 C12.6 1.4 12.3 0.3 11.3 0.2 C10.4 0.1 9.8 0.8 9 1.8 C6 5.6 3 9.1 0.1 12.1 Z" fill="#000"/></svg>
<div style="left:320px;top:69px;width:87px;height:31px;background:#444;border:1px solid #5a5a5a;border-bottom:none;border-radius:3px 3px 0 0;box-sizing:border-box;"></div>
<span class="t" style="top:78.33px;font-size:11px;line-height:14px;letter-spacing:-0.169px;left:331px;">3D Orbit</span>
<svg class="a" style="left:377.3px;top:77.9px" width="14" height="13" viewBox="0 0 14 13"><path d="M3.1 0.2 L7 6.2" stroke="#2c2c2c" stroke-width="0.7" fill="none"/><path d="M6.5 6 C8 8.2 10 10.5 11.6 11.7 C12.5 12.2 13.2 11.4 12.7 10.6 C11.4 9 9.4 7.3 7.5 5.5 Z" fill="#1b1b1b"/><path d="M0.1 12.1 L1.3 12 C4.2 10 7.6 6.9 11.9 2.3 C12.6 1.4 12.3 0.3 11.3 0.2 C10.4 0.1 9.8 0.8 9 1.8 C6 5.6 3 9.1 0.1 12.1 Z" fill="#000"/></svg>
<div style="left:408px;top:71px;width:102px;height:28px;background:#3c3c3c;border:1px solid #525252;border-bottom:none;border-radius:3px 3px 0 0;box-sizing:border-box;"></div>
<span class="t" style="top:79.13px;font-size:11px;line-height:14px;letter-spacing:0.044px;left:418.8px;">3D Attitude</span>
<svg class="a" style="left:480.3px;top:78.6px" width="14" height="13" viewBox="0 0 14 13"><path d="M3.1 0.2 L7 6.2" stroke="#2c2c2c" stroke-width="0.7" fill="none"/><path d="M6.5 6 C8 8.2 10 10.5 11.6 11.7 C12.5 12.2 13.2 11.4 12.7 10.6 C11.4 9 9.4 7.3 7.5 5.5 Z" fill="#1b1b1b"/><path d="M0.1 12.1 L1.3 12 C4.2 10 7.6 6.9 11.9 2.3 C12.6 1.4 12.3 0.3 11.3 0.2 C10.4 0.1 9.8 0.8 9 1.8 C6 5.6 3 9.1 0.1 12.1 Z" fill="#000"/></svg>
<div style="left:511px;top:71px;width:69px;height:28px;background:#3c3c3c;border:1px solid #525252;border-bottom:none;border-radius:3px 3px 0 0;box-sizing:border-box;"></div>
<span class="t" style="top:79.13px;font-size:11px;line-height:14px;letter-spacing:-0.231px;left:521.3px;">Plots</span>
<svg class="a" style="left:551.3px;top:78.6px" width="14" height="13" viewBox="0 0 14 13"><path d="M3.1 0.2 L7 6.2" stroke="#2c2c2c" stroke-width="0.7" fill="none"/><path d="M6.5 6 C8 8.2 10 10.5 11.6 11.7 C12.5 12.2 13.2 11.4 12.7 10.6 C11.4 9 9.4 7.3 7.5 5.5 Z" fill="#1b1b1b"/><path d="M0.1 12.1 L1.3 12 C4.2 10 7.6 6.9 11.9 2.3 C12.6 1.4 12.3 0.3 11.3 0.2 C10.4 0.1 9.8 0.8 9 1.8 C6 5.6 3 9.1 0.1 12.1 Z" fill="#000"/></svg>
<div style="left:223px;top:109px;width:1154px;height:670px;background:#4d4d4d;overflow:hidden;"><svg style="position:absolute;left:0;top:0" width="1154" height="670" viewBox="223 109 1154 670"><defs><linearGradient id="og" gradientUnits="userSpaceOnUse" x1="490.70000000000005" y1="429.1" x2="610.7" y2="445.1"><stop offset="0" stop-color="#1f3f84"/><stop offset="0.12" stop-color="#22448c"/><stop offset="0.33" stop-color="#21428a"/><stop offset="0.47" stop-color="#1b3670"/><stop offset="0.6" stop-color="#162c5a"/><stop offset="0.8" stop-color="#12254e"/><stop offset="1" stop-color="#11234a"/></linearGradient><radialGradient id="sh" gradientUnits="userSpaceOnUse" cx="684.7" cy="347.1" r="380"><stop offset="0.5" stop-color="#000" stop-opacity="0"/><stop offset="0.8" stop-color="#000518" stop-opacity="0.25"/><stop offset="1" stop-color="#000518" stop-opacity="0.5"/></radialGradient><clipPath id="gc"><circle cx="744.7" cy="437.1" r="254"/></clipPath><filter id="b1" x="-10%" y="-10%" width="120%" height="120%"><feGaussianBlur stdDeviation="1.2"/></filter><filter id="b4" x="-20%" y="-20%" width="140%" height="140%"><feGaussianBlur stdDeviation="4"/></filter></defs><circle cx="744.7" cy="437.1" r="254" fill="url(#og)"/><g clip-path="url(#gc)"><path d="M612.0 247.5 L634.5 225.0 L652.0 218.8 L682.0 212.5 L697.0 211.2 L712.0 217.5 L727.0 218.8 L739.5 223.8 L747.0 230.0 L754.5 236.2 L762.0 237.5 L779.5 243.8 L797.0 251.2 L812.0 260.0 L820.8 267.5 L818.2 277.5 L809.5 285.0 L802.0 295.0 L797.0 307.5 L789.5 317.5 L782.0 327.5 L769.5 328.8 L757.0 332.5 L747.0 340.0 L744.5 350.0 L737.0 360.0 L732.0 370.0 L722.0 380.0 L714.5 386.2 L705.8 388.8 L707.0 397.5 L702.0 405.0 L692.0 410.0 L685.8 415.0 L684.5 421.2 L674.5 422.5 L673.2 430.0 L677.0 440.0 L674.5 450.0 L672.0 455.0 L677.0 460.0 L674.5 468.8 L670.8 477.5 L673.2 487.5 L679.5 493.8 L684.5 496.2 L674.5 500.0 L664.5 496.2 L657.0 487.5 L652.0 475.0 L649.5 460.0 L647.0 440.0 L643.2 420.0 L640.8 402.5 L642.0 382.5 L642.0 362.5 L643.2 340.0 L645.8 325.0 L642.0 312.5 L627.0 307.5 L617.0 301.2 L609.5 290.0 L598.2 281.2 L600.8 270.0 L607.0 257.5Z" fill="#554932" /><g filter="url(#b1)"><path d="M749.5 237.5 L762.0 237.5 L779.5 243.8 L797.0 251.2 L812.0 260.0 L820.8 267.5 L818.2 277.5 L809.5 285.0 L802.0 295.0 L797.0 307.5 L789.5 317.5 L782.0 327.5 L769.5 328.8 L757.0 332.5 L747.0 340.0 L744.5 350.0 L737.0 360.0 L732.0 370.0 L722.0 380.0 L714.5 386.2 L705.8 388.8 L694.5 380.0 L687.0 365.0 L682.0 340.0 L674.5 320.0 L674.5 305.0 L687.0 300.0 L702.0 300.0 L712.0 290.0 L727.0 282.5 L737.0 265.0 L747.0 250.0Z" fill="#564e2f" /><path d="M759.5 240.0 L787.0 247.5 L817.0 265.0 L812.0 282.5 L787.0 285.0 L767.0 270.0Z" fill="#5f5238" /><path d="M612.0 250.0 L634.5 227.5 L652.0 221.2 L682.0 213.8 L712.0 218.8 L739.5 225.0 L749.5 237.5 L747.0 250.0 L737.0 265.0 L727.0 282.5 L712.0 290.0 L702.0 300.0 L687.0 300.0 L674.5 305.0 L662.0 300.0 L647.0 297.5 L632.0 287.5 L617.0 277.5 L604.5 270.0Z" fill="#243711" /><path d="M637.0 240.0 L687.0 222.5 L732.0 230.0 L737.0 252.5 L712.0 277.5 L674.5 290.0 L642.0 280.0 L622.0 265.0Z" fill="#1e2f0e" /><path d="M674.5 305.0 L687.0 300.0 L702.0 300.0 L712.0 305.0 L722.0 320.0 L737.0 340.0 L734.5 360.0 L722.0 380.0 L705.8 388.8 L694.5 380.0 L687.0 365.0 L682.0 340.0 L674.5 320.0Z" fill="#484b28" /><path d="M634.5 226.2 L652.0 219.5 L682.0 213.0 L697.0 212.0 L687.0 218.8 L662.0 223.8 L642.0 231.2Z" fill="#405622" /><path d="M598.2 281.2 L609.5 290.0 L617.0 301.2 L627.0 307.5 L642.0 312.5 L645.8 325.0 L643.2 340.0 L642.0 362.5 L642.0 382.5 L640.8 402.5 L643.2 420.0 L647.0 440.0 L649.5 460.0 L652.0 475.0 L657.0 487.5 L664.5 496.2 L674.5 500.0 L665.8 486.2 L659.5 465.0 L655.8 440.0 L652.0 415.0 L650.8 390.0 L654.5 365.0 L659.5 345.0 L663.2 327.5 L659.5 315.0 L647.0 308.8 L634.5 305.0 L622.0 297.5 L612.0 287.5 L604.5 277.5Z" fill="#74685a" /><path d="M649.0 415.0 L652.0 415.0 L654.5 440.0 L659.5 472.5 L667.0 491.2 L662.0 490.0 L655.0 472.5 L650.8 440.0Z" fill="#b4b2ae" opacity="0.55"/><path d="M622.0 305.0 L637.0 308.8 L652.0 315.0 L654.5 340.0 L652.0 365.0 L648.2 365.0 L647.0 340.0 L642.0 317.5 L627.0 311.2Z" fill="#96908a" opacity="0.55"/><path d="M640.8 390.0 L644.5 390.0 L647.0 427.5 L645.8 440.0 L642.0 415.0Z" fill="#3f5424" /></g><path d="M562.0 258.0 L574.5 247.5 L592.0 237.5 L604.5 231.2 L609.5 232.5 L603.2 239.5 L612.0 237.5 L622.0 232.5 L618.2 240.0 L602.0 243.0 L587.0 245.5 L574.5 251.8 L564.5 259.5Z" fill="#4b7029" /><path d="M698.2 477.5 L707.0 475.8 L705.8 479.5 L699.5 480.5Z" fill="#7a6a48" /><path d="M772.0 493.0 L776.0 498.0 L774.5 499.0 L771.5 494.5Z" fill="#d8d8d8" /><path d="M887.0 228.8 L893.2 240.0 L902.0 250.0 L914.5 267.5 L932.0 285.0 L952.0 315.0 L967.0 330.0 L975.8 345.0 L980.8 365.0 L983.2 385.0 L982.0 402.5 L977.0 417.5 L974.5 435.0 L972.0 450.0 L967.0 465.0 L960.8 485.0 L955.8 500.0 L958.2 512.5 L964.5 520.0 L977.0 515.0 L984.5 510.0 L1012.0 510.0 L1012.0 228.8Z" fill="#423d29" /><g filter="url(#b1)"><path d="M887.0 228.8 L893.2 240.0 L902.0 250.0 L914.5 267.5 L932.0 285.0 L947.0 305.0 L962.0 305.0 L937.0 265.0 L907.0 235.0Z" fill="#867b63" /><path d="M887.0 228.8 L893.2 240.0 L902.0 250.0 L914.5 267.5 L932.0 285.0 L947.0 305.0 L953.2 305.0 L934.5 278.8 L917.0 260.0 L903.2 243.8Z" fill="#485028" /><path d="M947.0 305.0 L952.0 315.0 L967.0 330.0 L975.8 345.0 L980.8 365.0 L983.2 385.0 L982.0 402.5 L1002.0 402.5 L987.0 340.0 L962.0 305.0Z" fill="#35461b" /><path d="M982.0 402.5 L977.0 417.5 L974.5 435.0 L972.0 450.0 L967.0 465.0 L960.8 485.0 L955.8 500.0 L958.2 512.5 L964.5 520.0 L977.0 515.0 L984.5 510.0 L1012.0 510.0 L1012.0 402.5Z" fill="#554736" /></g><path d="M717.0 536.2 L709.5 545.0 L708.2 560.0 L713.2 575.0 L715.8 590.0 L724.5 597.5 L737.0 602.5 L749.5 605.0 L764.5 593.8 L779.5 590.0 L797.0 589.5 L812.0 595.0 L822.0 605.0 L829.5 617.5 L835.8 625.0 L837.0 635.0 L844.5 641.2 L837.0 650.0 L822.0 660.0 L812.0 670.0 L797.0 680.0 L774.5 685.0 L749.5 688.0 L727.0 686.2 L702.0 680.0 L682.0 670.0 L679.5 668.8 L692.0 665.0 L682.0 650.0 L669.5 640.0 L657.0 630.0 L652.0 620.0 L659.5 610.0 L662.0 597.5 L672.0 591.2 L687.0 590.0 L694.5 582.5 L688.2 575.0 L692.0 565.0 L698.2 555.0 L702.0 542.5 L709.5 537.5Z" fill="#68696d" /><g filter="url(#b4)"><path d="M712.0 597.5 L732.0 597.5 L737.0 610.0 L722.0 617.5 L709.5 610.0Z" fill="#4b535a" /><path d="M687.0 645.0 L707.0 645.0 L709.5 660.0 L694.5 663.8 L684.5 655.0Z" fill="#50565c" /><path d="M737.0 610.0 L812.0 605.0 L824.5 635.0 L787.0 672.5 L737.0 672.5 L712.0 635.0Z" fill="#707175" /></g><path d="M764.5 593.8 L779.5 590.0 L797.0 589.5 L812.0 595.0 L807.0 597.5 L787.0 593.0 L769.5 596.2Z" fill="#6e6555" /><circle cx="744.7" cy="437.1" r="254" fill="url(#sh)"/></g><path d="M799.5 590.5 Q786.0 628.8 766.5 664.5" stroke="#fff" stroke-width="1.4" fill="none"/><line x1="962.8" y1="569.5" x2="1010.8" y2="599.0" stroke="#ff0000" stroke-width="1.5"/><line x1="537.0" y1="611.2" x2="549.5" y2="600.0" stroke="#00ff00" stroke-width="1.5"/><line x1="338.2" y1="711.6" x2="321.0" y2="726.0" stroke="#3cb371" stroke-width="1.6"/><path d="M316.4 729.8 L319.3 724.0 L322.7 728.0Z" fill="#3cb371"/><line x1="338.2" y1="711.6" x2="358.9" y2="724.8" stroke="#ff7f50" stroke-width="1.6"/><path d="M364.0 728.0 L357.5 727.0 L360.3 722.6Z" fill="#ff7f50"/><line x1="338.2" y1="711.6" x2="339.0" y2="695.0" stroke="#0000ff" stroke-width="1.6"/><path d="M339.3 689.0 L341.6 695.1 L336.4 694.9Z" fill="#0000ff"/><text x="366.5" y="720.4" font-family="Liberation Sans, sans-serif" font-style="italic" font-size="10" fill="#fff" text-anchor="middle">X</text><text x="327.0" y="720.4" font-family="Liberation Sans, sans-serif" font-style="italic" font-size="10" fill="#fff" text-anchor="middle">Y</text><text x="345.5" y="687.4" font-family="Liberation Sans, sans-serif" font-style="italic" font-size="10" fill="#fff" text-anchor="middle">Z</text></svg></div></div></div>
<div style="position:absolute;left:0;top:844px;width:1390px;height:1px;background:#e8e8e8"></div>
</body></html>
